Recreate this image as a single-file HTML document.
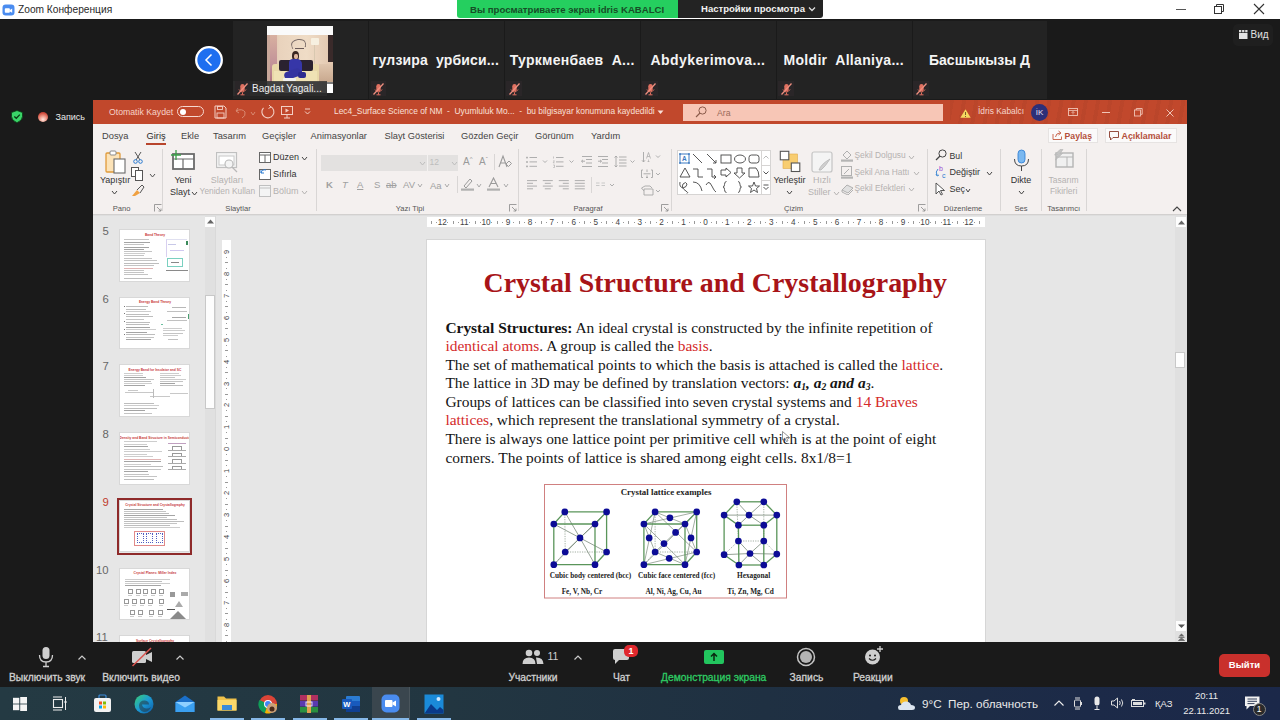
<!DOCTYPE html>
<html><head><meta charset="utf-8"><style>*{margin:0;padding:0;box-sizing:border-box}
html,body{width:1280px;height:720px;overflow:hidden;background:#1a1a1a;font-family:"Liberation Sans",sans-serif;position:relative}
.a{position:absolute}
.t{position:absolute;white-space:nowrap;line-height:1.15}
.r{color:#d42a2a}
sub{font-size:0.62em;vertical-align:-0.25em;line-height:0}
</style></head><body>

<div class="a" style="left:0;top:0;width:1280px;height:19px;background:#fff"></div>
<svg class="a" style="left:2px;top:3.5px" width="13" height="12" viewBox="0 0 14 13"><rect x="0.5" y="0.5" width="13" height="12" rx="3.5" fill="#4a8cf0"/><rect x="3" y="4.5" width="5.5" height="5" rx="1" fill="#fff"/><path d="M8.5 6.5 L11 5 V9.5 L8.5 8Z" fill="#fff"/></svg>
<div class="t" style="left:18px;top:4.3px;font-size:10.2px;color:#2a2a2a">Zoom Конференция</div>
<div class="a" style="left:457px;top:0;width:221px;height:18px;background:#25cf5f;border-radius:0 0 0 3px"></div>
<div class="t" style="left:470px;top:3.8px;font-size:9.6px;font-weight:bold;color:#174d27">Вы просматриваете экран İdris KABALCI</div>
<div class="a" style="left:678px;top:0;width:145px;height:18px;background:#232323;border-radius:0 0 3px 0"></div>
<div class="t" style="left:701px;top:3.8px;font-size:9.55px;font-weight:bold;color:#f2f2f2">Настройки просмотра</div>
<svg class="a" style="left:808px;top:6px" width="8" height="6"><path d="M1 1.5 L4 4.5 L7 1.5" stroke="#ddd" stroke-width="1.3" fill="none"/></svg>
<div class="a" style="left:1176px;top:9px;width:10px;height:1px;background:#555"></div>
<svg class="a" style="left:1213px;top:3px" width="12" height="12"><rect x="1.5" y="3.5" width="7" height="7" fill="none" stroke="#333" stroke-width="1"/><path d="M3.5 3.5 V1.5 H10.5 V8.5 H8.5" fill="none" stroke="#333" stroke-width="1"/></svg>
<svg class="a" style="left:1253px;top:3px" width="12" height="12"><path d="M1 1 L11 11 M11 1 L1 11" stroke="#333" stroke-width="1.1"/></svg>
<div class="a" style="left:233px;top:21px;width:135px;height:78px;background:#232323"></div><div class="a" style="left:369px;top:21px;width:135px;height:78px;background:#232323"></div><div class="a" style="left:505px;top:21px;width:135px;height:78px;background:#232323"></div><div class="a" style="left:641px;top:21px;width:135px;height:78px;background:#232323"></div><div class="a" style="left:777px;top:21px;width:135px;height:78px;background:#232323"></div><div class="a" style="left:913px;top:21px;width:134px;height:78px;background:#232323"></div><div class="t" style="left:372.6px;top:51.5px;font-size:14px;font-weight:bold;color:#f4f4f4;letter-spacing:0.16px">гулзира&nbsp; урбиси...</div><div class="t" style="left:509.8px;top:51.5px;font-size:14px;font-weight:bold;color:#f4f4f4;letter-spacing:0.27px">Туркменбаев&nbsp; А...</div><div class="t" style="left:650.5px;top:51.5px;font-size:14px;font-weight:bold;color:#f4f4f4;letter-spacing:0.45px">Abdykerimova...</div><div class="t" style="left:783.5px;top:51.5px;font-size:14px;font-weight:bold;color:#f4f4f4;letter-spacing:0.31px">Moldir&nbsp; Allaniya...</div><div class="t" style="left:929px;top:51.5px;font-size:14px;font-weight:bold;color:#f4f4f4;letter-spacing:0.0px">Басшыкызы Д</div>
<div class="a" style="left:267px;top:26px;width:66px;height:67px;background:linear-gradient(90deg,#d9b9a6 0,#e9d3bd 20%,#efdcc6 60%,#e2c6ae 100%);overflow:hidden">
 <div class="a" style="left:0;top:0;width:66px;height:8.5px;background:#fafafa"></div>
 <div class="a" style="left:0;top:9px;width:3px;height:58px;background:#c8a89a"></div>
 <div class="a" style="left:3px;top:9px;width:7px;height:52px;background:linear-gradient(180deg,#d8b0a0,#c09098 60%,#a86878)"></div>
 <div class="a" style="left:61px;top:9px;width:5px;height:27px;background:#3a2a2a"></div>
 <div class="a" style="left:44px;top:12px;width:8px;height:7px;background:#f7f0e0;border-radius:1px"></div>
 <div class="a" style="left:47px;top:19px;width:1px;height:34px;background:#d8c8b0"></div>
 <div class="a" style="left:24px;top:13px;width:15px;height:10px;border:1.5px solid #7a6c68;border-radius:50% 50% 30% 30%;border-bottom-color:transparent;transform:rotate(-8deg)"></div>
 <div class="a" style="left:28px;top:18px;width:9px;height:5px;border-bottom:1.5px solid #6a5a58"></div>
 <div class="a" style="left:5px;top:38px;width:47px;height:20px;background:#e8d8a8;border-radius:3px 3px 1px 1px"></div>
 <div class="a" style="left:12px;top:34px;width:34px;height:11px;background:#2a2230;border-radius:2px"></div>
 <div class="a" style="left:7px;top:45px;width:43px;height:11px;background:#efe2b4"></div>
 <div class="a" style="left:25px;top:25px;width:7px;height:9px;background:#3a2622;border-radius:50% 50% 40% 40%"></div>
 <div class="a" style="left:27px;top:28px;width:4px;height:5px;background:#e0b8a0;border-radius:40%"></div>
 <div class="a" style="left:22px;top:33px;width:13px;height:15px;background:#3636a8;border-radius:4px 5px 2px 2px"></div>
 <div class="a" style="left:17px;top:44px;width:17px;height:8px;background:#3434a0;border-radius:4px;transform:rotate(-20deg)"></div>
 <div class="a" style="left:31px;top:46px;width:8px;height:6px;background:#2c2c90;border-radius:2px"></div>
 <div class="a" style="left:16px;top:52px;width:13px;height:3px;background:#f0f0f0;border-radius:1px"></div>
 <div class="a" style="left:0;top:56px;width:66px;height:11px;background:linear-gradient(90deg,#8a8a8a,#9a9a9a 50%,#7a7a7a)"></div>
 <div class="a" style="left:52px;top:38px;width:14px;height:18px;background:linear-gradient(180deg,#e0c6ae,#c8a88e)"></div>
</div>
<div class="a" style="left:233px;top:81px;width:94px;height:15px;background:rgba(45,45,45,0.8)"></div>
<div class="t" style="left:252px;top:83px;font-size:10px;color:#eee">Bagdat Yagali...</div>
<div class="a" style="left:327px;top:84px;width:6px;height:9px;background:#fff"></div>

<svg class="a" style="left:194.5px;top:46px" width="28" height="28"><circle cx="14" cy="14" r="12.8" fill="#1e6ff0" stroke="#fff" stroke-width="2.3"/><path d="M16.5 8.5 L11 14 L16.5 19.5" stroke="#fff" stroke-width="1.5" fill="none"/></svg>

<div class="a" style="left:1233px;top:24px;width:40px;height:22px;background:#1f1f1f;border-radius:5px"></div>
<svg class="a" style="left:1238.5px;top:30px" width="10" height="10"><rect x="0" y="3" width="8.5" height="6" fill="#e4e4e4"/><rect x="0" y="0" width="2.3" height="2.3" fill="#ddd"/><rect x="3.1" y="0" width="2.3" height="2.3" fill="#ddd"/><rect x="6.2" y="0" width="2.3" height="2.3" fill="#ddd"/></svg>
<div class="t" style="left:1250.5px;top:29px;font-size:10px;color:#e0e0e0">Вид</div>

<svg class="a" style="left:10.5px;top:110px" width="12" height="13"><path d="M6 0.5 L11.5 2.5 V6.5 Q11.5 10.5 6 12.7 Q0.5 10.5 0.5 6.5 V2.5Z" fill="#3ad468" stroke="#0a3a14" stroke-width="0.8"/><path d="M3.3 6.5 L5.3 8.3 L8.8 4.6" stroke="#0a3a14" stroke-width="1.3" fill="none"/></svg>
<div class="a" style="left:37.8px;top:111.8px;width:10.5px;height:10.5px;border-radius:50%;background:radial-gradient(circle at 50% 75%,#ffe8e0 0,#f0a090 35%,#d05040 70%,#a02020 100%)"></div>
<div class="t" style="left:55.5px;top:111.5px;font-size:9px;color:#e8e8e8">Запись</div>
<div class="a" style="left:234.5px;top:80.8px;width:15.5px;height:15.5px;background:#2a2628"></div><svg class="a" style="left:236.0px;top:81.5px" width="13" height="14"><rect x="4.3" y="2" width="4.4" height="7.5" rx="2.2" fill="#e07060"/><path d="M3 7.5 Q6.5 12.5 10 7.5 M6.5 10.5 V12.5 M4.5 12.8 H8.5" stroke="#e07060" stroke-width="1" fill="none"/><path d="M1.5 12.5 L11.5 1.5" stroke="#f09080" stroke-width="1.2"/></svg><div class="a" style="left:370.5px;top:80.8px;width:15.5px;height:15.5px;background:#2a2628"></div><svg class="a" style="left:372.0px;top:81.5px" width="13" height="14"><rect x="4.3" y="2" width="4.4" height="7.5" rx="2.2" fill="#e07060"/><path d="M3 7.5 Q6.5 12.5 10 7.5 M6.5 10.5 V12.5 M4.5 12.8 H8.5" stroke="#e07060" stroke-width="1" fill="none"/><path d="M1.5 12.5 L11.5 1.5" stroke="#f09080" stroke-width="1.2"/></svg><div class="a" style="left:506px;top:80.8px;width:15.5px;height:15.5px;background:#2a2628"></div><svg class="a" style="left:507.5px;top:81.5px" width="13" height="14"><rect x="4.3" y="2" width="4.4" height="7.5" rx="2.2" fill="#e07060"/><path d="M3 7.5 Q6.5 12.5 10 7.5 M6.5 10.5 V12.5 M4.5 12.8 H8.5" stroke="#e07060" stroke-width="1" fill="none"/><path d="M1.5 12.5 L11.5 1.5" stroke="#f09080" stroke-width="1.2"/></svg><div class="a" style="left:642px;top:80.8px;width:15.5px;height:15.5px;background:#2a2628"></div><svg class="a" style="left:643.5px;top:81.5px" width="13" height="14"><rect x="4.3" y="2" width="4.4" height="7.5" rx="2.2" fill="#e07060"/><path d="M3 7.5 Q6.5 12.5 10 7.5 M6.5 10.5 V12.5 M4.5 12.8 H8.5" stroke="#e07060" stroke-width="1" fill="none"/><path d="M1.5 12.5 L11.5 1.5" stroke="#f09080" stroke-width="1.2"/></svg><div class="a" style="left:778px;top:80.8px;width:15.5px;height:15.5px;background:#2a2628"></div><svg class="a" style="left:779.5px;top:81.5px" width="13" height="14"><rect x="4.3" y="2" width="4.4" height="7.5" rx="2.2" fill="#e07060"/><path d="M3 7.5 Q6.5 12.5 10 7.5 M6.5 10.5 V12.5 M4.5 12.8 H8.5" stroke="#e07060" stroke-width="1" fill="none"/><path d="M1.5 12.5 L11.5 1.5" stroke="#f09080" stroke-width="1.2"/></svg><div class="a" style="left:913px;top:80.8px;width:15.5px;height:15.5px;background:#2a2628"></div><svg class="a" style="left:914.5px;top:81.5px" width="13" height="14"><rect x="4.3" y="2" width="4.4" height="7.5" rx="2.2" fill="#e07060"/><path d="M3 7.5 Q6.5 12.5 10 7.5 M6.5 10.5 V12.5 M4.5 12.8 H8.5" stroke="#e07060" stroke-width="1" fill="none"/><path d="M1.5 12.5 L11.5 1.5" stroke="#f09080" stroke-width="1.2"/></svg><div class="a" style="left:93px;top:100px;width:1094px;height:542px;background:#e6e6e6"></div><div class="a" style="left:93px;top:100px;width:1094px;height:24px;background:#c1482c"></div><div class="a" style="left:950px;top:100px;width:237px;height:24px;background:repeating-linear-gradient(100deg,rgba(0,0,0,0.035) 0 4px,rgba(255,255,255,0.0) 4px 12px)"></div><div class="t" style="left:109px;top:107.0px;font-size:8.7px;color:#f6d2c8;">Otomatik Kaydet</div><div class="a" style="left:177px;top:106px;width:27px;height:11px;border:1.2px solid #f6d8d0;border-radius:6px"></div><div class="a" style="left:180px;top:108.5px;width:6px;height:6px;border-radius:50%;background:#fff"></div><svg class="a" style="left:214px;top:105px" width="13" height="14"><path d="M1 1 H10 L12 3 V13 H1Z" fill="none" stroke="#f3cfc4" stroke-width="1"/><rect x="3.5" y="1.5" width="5" height="3" fill="none" stroke="#f3cfc4" stroke-width="0.9"/><rect x="3" y="8" width="7" height="5" fill="none" stroke="#f3cfc4" stroke-width="0.9"/></svg><svg class="a" style="left:234px;top:105px" width="14" height="14"><path d="M4 3 L2 6 L5 8 M2 6 Q8 3 11 7 Q12 11 8 13" fill="none" stroke="#d98a72" stroke-width="1"/></svg><svg class="a" style="left:250px;top:111px" width="6" height="5"><path d="M1 1 L3.0 4 L5 1" stroke="#d98a72" stroke-width="1" fill="none"/></svg><svg class="a" style="left:260px;top:104px" width="15" height="15"><path d="M10.5 2.5 A6 6 0 1 1 3.5 3.8" fill="none" stroke="#f3cfc4" stroke-width="1.1"/><path d="M9 1 L11 3 L8.5 4.5" fill="none" stroke="#f3cfc4" stroke-width="1"/></svg><svg class="a" style="left:281px;top:105px" width="12" height="14"><rect x="0.5" y="1.5" width="11" height="8" fill="none" stroke="#f3cfc4" stroke-width="1"/><path d="M6 9.5 V13 M3 13 H9" stroke="#f3cfc4" stroke-width="1"/><path d="M4.5 3.5 L8 5.5 L4.5 7.5Z" fill="#f3cfc4"/></svg><svg class="a" style="left:304px;top:108px" width="7" height="7"><path d="M1 1 H6 M1 3.5 L3.5 6 L6 3.5" stroke="#f3cfc4" stroke-width="1" fill="none"/></svg><div class="t" style="left:334px;top:107.1px;font-size:8.4px;color:#fae0d8;">Lec4_Surface Science of NM&nbsp; -&nbsp; Uyumluluk Mo...&nbsp; -&nbsp; bu bilgisayar konumuna kaydedildi</div><svg class="a" style="left:657px;top:110px" width="7" height="5"><path d="M0.5 0.5 H6.5 L3.5 4Z" fill="#fae0d8"/></svg><div class="a" style="left:683px;top:104px;width:260px;height:17px;background:#f7c6b6"></div><svg class="a" style="left:695px;top:106px" width="12" height="12"><circle cx="7.5" cy="4.5" r="3.6" fill="none" stroke="#8a5a4a" stroke-width="1"/><path d="M5 7 L1 11" stroke="#8a5a4a" stroke-width="1.1"/></svg><div class="t" style="left:717px;top:107.5px;font-size:8.7px;color:#9a6a5a;">Ara</div><svg class="a" style="left:960px;top:108.5px" width="11" height="9"><path d="M5.5 0.3 L10.7 8.7 H0.3Z" fill="#f6d860"/><path d="M5.5 3 V6 M5.5 7 V8" stroke="#6a5020" stroke-width="0.9"/></svg><div class="t" style="left:978px;top:107.1px;font-size:8.4px;color:#f6d6cc;">İdris Kabalcı</div><div class="a" style="left:1031px;top:104px;width:17px;height:17px;border-radius:50%;background:#2c2f78"></div><div class="t" style="left:1039.5px;top:107.9px;font-size:8px;color:#e8e0f0;transform:translateX(-50%);">İK</div><svg class="a" style="left:1067.5px;top:108px" width="10" height="8"><rect x="0.5" y="0.5" width="9" height="7" fill="none" stroke="#f0c4b6" stroke-width="0.9"/><path d="M0.5 2.5 H9.5" stroke="#f0c4b6" stroke-width="0.8"/><path d="M5 3.5 V6.5 M3.5 5 L5 3.5 L6.5 5" stroke="#f0c4b6" stroke-width="0.7" fill="none"/></svg><div class="a" style="left:1102px;top:112px;width:7.5px;height:1px;background:#f0c4b6"></div><svg class="a" style="left:1133.5px;top:108px" width="9" height="9"><rect x="0.5" y="2" width="6" height="6" fill="none" stroke="#f0c4b6" stroke-width="0.9"/><path d="M2.3 2 V0.5 H8.2 V6.3 H6.5" fill="none" stroke="#f0c4b6" stroke-width="0.9"/></svg><svg class="a" style="left:1166px;top:108.5px" width="8" height="8"><path d="M0.5 0.5 L7.5 7.5 M7.5 0.5 L0.5 7.5" stroke="#f0c4b6" stroke-width="1"/></svg><div class="a" style="left:93px;top:124px;width:1094px;height:90px;background:#f4f0ef"></div><div class="a" style="left:93px;top:214px;width:1094px;height:1px;background:#d2d0cf"></div><div class="a" style="left:93px;top:215px;width:1094px;height:1px;background:#dedede"></div><div class="t" style="left:102px;top:130.6px;font-size:9.3px;color:#444;">Dosya</div><div class="t" style="left:146.5px;top:130.6px;font-size:9.3px;color:#2b2b2b;">Giriş</div><div class="t" style="left:181px;top:130.6px;font-size:9.3px;color:#444;">Ekle</div><div class="t" style="left:213px;top:130.6px;font-size:9.3px;color:#444;">Tasarım</div><div class="t" style="left:262px;top:130.6px;font-size:9.3px;color:#444;">Geçişler</div><div class="t" style="left:310.6px;top:130.6px;font-size:9.3px;color:#444;">Animasyonlar</div><div class="t" style="left:384.5px;top:130.6px;font-size:9.3px;color:#444;">Slayt Gösterisi</div><div class="t" style="left:461px;top:130.6px;font-size:9.3px;color:#444;">Gözden Geçir</div><div class="t" style="left:535px;top:130.6px;font-size:9.3px;color:#444;">Görünüm</div><div class="t" style="left:591px;top:130.6px;font-size:9.3px;color:#444;">Yardım</div><div class="a" style="left:146px;top:142.5px;width:20px;height:2.2px;background:#b8452c"></div><div class="a" style="left:1048px;top:128px;width:50px;height:15px;background:#fbfafa;border:1px solid #e6e3e2"></div><svg class="a" style="left:1052px;top:130px" width="11" height="10"><path d="M1 4 V9.5 H9.5 V6.5" fill="none" stroke="#c45a40" stroke-width="0.9"/><path d="M3.5 7 Q4 3 8 3 M6.5 1 L9 3 L6.5 5" fill="none" stroke="#c45a40" stroke-width="0.9"/></svg><div class="t" style="left:1064.5px;top:130.8px;font-size:8.7px;color:#b4503c;font-weight:bold">Paylaş</div><div class="a" style="left:1105px;top:128px;width:72px;height:15px;background:#fbfafa;border:1px solid #e6e3e2"></div><svg class="a" style="left:1109px;top:131px" width="10" height="10"><path d="M0.5 0.5 H9.5 V6.5 H4 L1.5 9 V6.5 H0.5Z" fill="none" stroke="#8a3a2a" stroke-width="0.9"/></svg><div class="t" style="left:1121.5px;top:130.6px;font-size:8.9px;color:#b4503c;font-weight:bold">Açıklamalar</div><div class="a" style="left:162.4px;top:149px;width:1px;height:62px;background:#d9d6d5"></div><div class="a" style="left:316px;top:149px;width:1px;height:62px;background:#d9d6d5"></div><div class="a" style="left:517.5px;top:149px;width:1px;height:62px;background:#d9d6d5"></div><div class="a" style="left:670.5px;top:149px;width:1px;height:62px;background:#d9d6d5"></div><div class="a" style="left:927px;top:149px;width:1px;height:62px;background:#d9d6d5"></div><div class="a" style="left:1000px;top:149px;width:1px;height:62px;background:#d9d6d5"></div><div class="a" style="left:1041px;top:149px;width:1px;height:62px;background:#d9d6d5"></div><div class="a" style="left:1085.6px;top:149px;width:1px;height:62px;background:#d9d6d5"></div><div class="t" style="left:121.5px;top:204.6px;font-size:7.6px;color:#555;transform:translateX(-50%);">Pano</div><div class="t" style="left:238px;top:204.6px;font-size:7.6px;color:#555;transform:translateX(-50%);">Slaytlar</div><div class="t" style="left:410px;top:204.6px;font-size:7.6px;color:#555;transform:translateX(-50%);">Yazı Tipi</div><div class="t" style="left:588px;top:204.6px;font-size:7.6px;color:#555;transform:translateX(-50%);">Paragraf</div><div class="t" style="left:793.5px;top:204.6px;font-size:7.6px;color:#555;transform:translateX(-50%);">Çizim</div><div class="t" style="left:963px;top:204.6px;font-size:7.6px;color:#555;transform:translateX(-50%);">Düzenleme</div><div class="t" style="left:1021px;top:204.6px;font-size:7.6px;color:#555;transform:translateX(-50%);">Ses</div><div class="t" style="left:1063.6px;top:204.6px;font-size:7.6px;color:#555;transform:translateX(-50%);">Tasarımcı</div><svg class="a" style="left:154px;top:204px" width="8" height="8"><path d="M0.5 7.5 V0.5 H7.5" fill="none" stroke="#888" stroke-width="0.8"/><path d="M3 3 L7 7 M4.5 7 H7 V4.5" fill="none" stroke="#888" stroke-width="0.8"/></svg><svg class="a" style="left:509px;top:204px" width="8" height="8"><path d="M0.5 7.5 V0.5 H7.5" fill="none" stroke="#888" stroke-width="0.8"/><path d="M3 3 L7 7 M4.5 7 H7 V4.5" fill="none" stroke="#888" stroke-width="0.8"/></svg><svg class="a" style="left:661px;top:204px" width="8" height="8"><path d="M0.5 7.5 V0.5 H7.5" fill="none" stroke="#888" stroke-width="0.8"/><path d="M3 3 L7 7 M4.5 7 H7 V4.5" fill="none" stroke="#888" stroke-width="0.8"/></svg><svg class="a" style="left:918px;top:204px" width="8" height="8"><path d="M0.5 7.5 V0.5 H7.5" fill="none" stroke="#888" stroke-width="0.8"/><path d="M3 3 L7 7 M4.5 7 H7 V4.5" fill="none" stroke="#888" stroke-width="0.8"/></svg><svg class="a" style="left:1172px;top:206px" width="10" height="6"><path d="M1 5 L5 1 L9 5" stroke="#444" stroke-width="1.1" fill="none"/></svg><svg class="a" style="left:104px;top:150px" width="24" height="24"><rect x="2" y="3" width="14" height="19" rx="1" fill="#fce3b8" stroke="#e09a3a" stroke-width="1.3"/><rect x="6" y="1" width="6" height="4" rx="1" fill="#fff" stroke="#8a8a8a" stroke-width="1"/><rect x="10" y="9" width="11" height="14" fill="#fff" stroke="#6a6a6a" stroke-width="1.1"/></svg><div class="t" style="left:100px;top:175.1px;font-size:9px;color:#333;">Yapıştır</div><svg class="a" style="left:111px;top:190px" width="7" height="5"><path d="M1 1 L3.5 4 L6 1" stroke="#444" stroke-width="1" fill="none"/></svg><svg class="a" style="left:133px;top:151px" width="10" height="13"><path d="M2 1 L7 9 M8 1 L3 9" stroke="#555" stroke-width="1"/><circle cx="2.5" cy="10.5" r="1.8" fill="none" stroke="#2a7ad0" stroke-width="1"/><circle cx="7.5" cy="10.5" r="1.8" fill="none" stroke="#2a7ad0" stroke-width="1"/></svg><svg class="a" style="left:131px;top:167px" width="13" height="14"><rect x="0.5" y="0.5" width="7" height="9" fill="#fff" stroke="#555"/><rect x="4.5" y="3.5" width="7" height="10" fill="#fff" stroke="#555"/></svg><svg class="a" style="left:149px;top:173px" width="7" height="5"><path d="M1 1 L3.5 4 L6 1" stroke="#555" stroke-width="1" fill="none"/></svg><svg class="a" style="left:131px;top:184px" width="14" height="13"><path d="M1 12 L6 6 L9 9 L4 12Z" fill="#f0a040"/><path d="M6 6 L11 1 L13 3 L9 9" fill="none" stroke="#555" stroke-width="1"/></svg><svg class="a" style="left:170px;top:150px" width="26" height="21"><rect x="3" y="4" width="21" height="15" fill="#fff" stroke="#6a6a6a" stroke-width="1.8"/><path d="M3 9 H24 M13 9 V19" stroke="#6a6a6a" stroke-width="1.2"/><path d="M6 0 V10 M1 5 H11" stroke="#3aa048" stroke-width="1.3"/></svg><div class="t" style="left:183px;top:175.1px;font-size:9px;color:#333;transform:translateX(-50%);">Yeni</div><div class="t" style="left:170px;top:186.8px;font-size:9px;color:#333;">Slayt</div><svg class="a" style="left:191px;top:191px" width="7" height="5"><path d="M1 1 L3.5 4 L6 1" stroke="#444" stroke-width="1" fill="none"/></svg><svg class="a" style="left:216px;top:152px" width="23" height="22"><rect x="0.5" y="0.5" width="20" height="15" fill="#f4f4f4" stroke="#c0c0c0" stroke-width="1.2"/><rect x="3" y="4" width="15" height="9" fill="#fff" stroke="#c8c8c8"/><circle cx="13" cy="12" r="4" fill="#f4f4f4" stroke="#b8b8b8" stroke-width="1.1"/><path d="M16 15 L21 20" stroke="#b8b8b8" stroke-width="1.3"/></svg><div class="t" style="left:227px;top:175.1px;font-size:9px;color:#b4b2b1;transform:translateX(-50%);">Slaytları</div><div class="t" style="left:199.6px;top:187.1px;font-size:8.4px;color:#b4b2b1;">Yeniden Kullan</div><svg class="a" style="left:259px;top:152px" width="12" height="11"><rect x="0.5" y="0.5" width="11" height="10" fill="#fff" stroke="#666"/><path d="M0.5 3 H11.5 M6 3 V10.5" stroke="#666"/></svg><div class="t" style="left:273px;top:152.3px;font-size:9px;color:#333;">Düzen</div><svg class="a" style="left:301px;top:156px" width="7" height="5"><path d="M1 1 L3.5 4 L6 1" stroke="#444" stroke-width="1" fill="none"/></svg><svg class="a" style="left:259px;top:168px" width="12" height="12"><rect x="0.5" y="1.5" width="11" height="10" fill="#fff" stroke="#666"/><path d="M2 5 Q3 1 7 2 M2 2 V5 H5" fill="none" stroke="#2a7ad0" stroke-width="1"/></svg><div class="t" style="left:273px;top:169.1px;font-size:9px;color:#333;">Sıfırla</div><svg class="a" style="left:259px;top:185px" width="12" height="12"><rect x="0.5" y="0.5" width="11" height="11" fill="#f4f4f4" stroke="#c0c0c0"/><path d="M0.5 3 H11.5" stroke="#c0c0c0"/></svg><div class="t" style="left:273px;top:186.3px;font-size:9px;color:#b4b2b1;">Bölüm</div><svg class="a" style="left:301px;top:190px" width="7" height="5"><path d="M1 1 L3.5 4 L6 1" stroke="#b4b2b1" stroke-width="1" fill="none"/></svg><div class="a" style="left:321px;top:154.5px;width:106px;height:16.5px;background:#e3e1e0"></div><div class="a" style="left:427px;top:154.5px;width:31px;height:16.5px;background:#e3e1e0;border-left:1px solid #f3f1f0"></div><svg class="a" style="left:419px;top:161px" width="7" height="5"><path d="M1 1 L3.5 4 L6 1" stroke="#bdbdbd" stroke-width="1" fill="none"/></svg><div class="t" style="left:429.5px;top:157.6px;font-size:8.5px;color:#bdbdbd;">12</div><svg class="a" style="left:451px;top:161px" width="7" height="5"><path d="M1 1 L3.5 4 L6 1" stroke="#bdbdbd" stroke-width="1" fill="none"/></svg><div class="t" style="left:463px;top:156.2px;font-size:10px;color:#9a9a9a;">A<sup style="font-size:6px">^</sup></div><div class="t" style="left:479px;top:156.2px;font-size:10px;color:#9a9a9a;">A<sup style="font-size:6px">ˇ</sup></div><div class="a" style="left:494px;top:154px;width:1px;height:16px;background:#d9d6d5"></div><svg class="a" style="left:498px;top:154px" width="14" height="15"><path d="M1 13 L5 2 L9 13 M2.5 9 H7.5" fill="none" stroke="#9a9a9a" stroke-width="1.1"/><path d="M8 10 L11 7 L13.5 9.5 L10.5 12.5Z" fill="none" stroke="#9a9a9a"/></svg><div class="t" style="left:326px;top:180.0px;font-size:9.5px;color:#a0a0a0;font-weight:bold">K</div><div class="t" style="left:342px;top:180.0px;font-size:9.5px;color:#a0a0a0;font-style:italic">T</div><div class="t" style="left:357px;top:180.0px;font-size:9.5px;color:#a0a0a0;text-decoration:underline">A</div><div class="t" style="left:374px;top:180.0px;font-size:9.5px;color:#a0a0a0;">S</div><div class="t" style="left:386px;top:180.0px;font-size:9.5px;color:#a0a0a0;text-decoration:line-through">ab</div><div class="t" style="left:403px;top:180.0px;font-size:9.5px;color:#a0a0a0;">AV</div><svg class="a" style="left:417px;top:183px" width="6" height="5"><path d="M1 1 L3.0 4 L5 1" stroke="#aaa" stroke-width="1" fill="none"/></svg><div class="t" style="left:430px;top:180.5px;font-size:9.5px;color:#a0a0a0;">Aa</div><svg class="a" style="left:444px;top:183px" width="6" height="5"><path d="M1 1 L3.0 4 L5 1" stroke="#aaa" stroke-width="1" fill="none"/></svg><div class="a" style="left:456.8px;top:176px;width:1px;height:17px;background:#d9d6d5"></div><svg class="a" style="left:461px;top:177px" width="13" height="14"><path d="M3 9 L9 2 L11 4 L5 11Z" fill="none" stroke="#9a9a9a" stroke-width="1"/><rect x="0" y="11.5" width="13" height="2.2" fill="#b0b0b0"/></svg><svg class="a" style="left:476px;top:183px" width="6" height="5"><path d="M1 1 L3.0 4 L5 1" stroke="#aaa" stroke-width="1" fill="none"/></svg><svg class="a" style="left:487px;top:177px" width="13" height="14"><path d="M2 10 L6.5 1 L11 10 M3.8 6.5 H9.2" fill="none" stroke="#9a9a9a" stroke-width="1.1"/><rect x="0" y="11.5" width="13" height="2.2" fill="#b0b0b0"/></svg><svg class="a" style="left:503px;top:183px" width="6" height="5"><path d="M1 1 L3.0 4 L5 1" stroke="#aaa" stroke-width="1" fill="none"/></svg><svg class="a" style="left:520px;top:148px" width="150" height="50" viewBox="520 148 150 50" fill="none" stroke="#a6a6a6" stroke-width="0.9">
<rect x="526.2" y="156.8" width="1.6" height="1.6" fill="#a6a6a6" stroke="none"/><rect x="526.2" y="161.2" width="1.6" height="1.6" fill="#a6a6a6" stroke="none"/><rect x="526.2" y="165.6" width="1.6" height="1.6" fill="#a6a6a6" stroke="none"/>
<path d="M529.5 157.5 H537 M529.5 161.9 H537 M529.5 166.3 H537"/>
<path d="M543 160.5 L545 162.5 L547 160.5"/>
<path d="M553.5 156.5 V158.5 M553.2 160.8 H554.4 L553.2 162.8 H554.6 M553.2 165 H554.5 V167.5 H553.2" stroke-width="0.6"/>
<path d="M556 157.5 H563.5 M556 161.9 H563.5 M556 166.3 H563.5"/>
<path d="M569.5 160.5 L571.5 162.5 L573.5 160.5"/>
<path d="M582 156.5 H592 M586 159.5 H592 M586 163 H592 M582 166.5 H592"/><path d="M585 161.2 H581.5 M583 159.8 L581.5 161.2 L583 162.6"/>
<path d="M598 156.5 H608 M602 159.5 H608 M602 163 H608 M598 166.5 H608"/><path d="M598 161.2 H601.5 M600 159.8 L601.5 161.2 L600 162.6"/>
<path d="M619 157 H626.5 M619 160 H626.5 M619 163 H626.5 M619 166 H626.5"/><path d="M616 156 V167 M614.6 157.6 L616 156 L617.4 157.6 M614.6 165.4 L616 167 L617.4 165.4"/>
<path d="M630.5 160.5 L632.5 162.5 L634.5 160.5"/>
<path d="M643.5 152 V162 M642 160.3 L643.5 162 L645 160.3"/><path d="M646.5 158.5 L648.5 152.5 L650.5 158.5 M647.2 156.5 H649.8" stroke-width="0.7"/><path d="M648.5 159.5 V162 M647.5 161 L648.5 162 L649.5 161" stroke-width="0.6"/>
<path d="M656 155.5 L658 157.5 L660 155.5"/>
<path d="M527 180.6 H537 M527 183.3 H533 M527 186.1 H537 M527 188.8 H533"/>
<path d="M542.8 180.6 H552.8 M544.8 183.3 H550.8 M542.8 186.1 H552.8 M544.8 188.8 H550.8"/>
<path d="M558.8 180.6 H568.8 M562.8 183.3 H568.8 M558.8 186.1 H568.8 M562.8 188.8 H568.8"/>
<path d="M574.8 180.6 H584.8 M574.8 183.3 H584.8 M574.8 186.1 H584.8 M574.8 188.8 H584.8"/>
<path d="M596 183 H599.5 M596 185.5 H599.5 M601.5 183 H605 M601.5 185.5 H605" stroke="#c4c4c4"/>
<path d="M610 184 L612 186 L614 184"/>
<path d="M643 170 H641.5 V177.5 H643 M651 170 H652.5 V177.5 H651 M643.5 173.8 H650.5 M647 169.5 V172 M647 175.5 V178 M646 177 L647 178 L648 177"/>
<path d="M656 173 L658 175 L660 173"/>
<path d="M641.5 188 L645 186 H650 L652 188 M644 189 H653 V195 H644Z" fill="#f4f0ef"/><path d="M641.5 188 L644 191"/>
<path d="M656 190 L658 192 L660 190"/>
</svg><div class="a" style="left:590.6px;top:177px;width:1px;height:16px;background:#d9d6d5"></div><div class="a" style="left:677px;top:150px;width:94px;height:44.5px;background:#fff;border:1px solid #d6d4d3"></div><div class="a" style="left:760.5px;top:150px;width:10.5px;height:44.5px;border-left:1px solid #d6d4d3"></div><div class="a" style="left:760.5px;top:165px;width:10.5px;height:1px;background:#d6d4d3"></div><div class="a" style="left:760.5px;top:180px;width:10.5px;height:1px;background:#d6d4d3"></div><svg class="a" style="left:763px;top:155px" width="6" height="4"><path d="M0.5 3.5 L3 1 L5.5 3.5" stroke="#bbb" fill="none"/></svg><svg class="a" style="left:763px;top:171px" width="6" height="4"><path d="M0.5 0.5 L3 3 L5.5 0.5" stroke="#555" fill="none"/></svg><svg class="a" style="left:763px;top:184px" width="6" height="7"><path d="M0.5 1 H5.5 M0.5 3 L3 5.5 L5.5 3" stroke="#555" fill="none"/></svg><svg class="a" style="left:678px;top:151px" width="82" height="43" viewBox="0 0 82 43" fill="none" stroke="#444" stroke-width="0.9">
<rect x="2" y="3" width="9" height="9" stroke="#3a78c0" stroke-width="1"/><rect x="1.2" y="2.2" width="1.6" height="1.6" fill="#3a78c0" stroke="none"/><rect x="10.2" y="2.2" width="1.6" height="1.6" fill="#3a78c0" stroke="none"/><rect x="1.2" y="11.2" width="1.6" height="1.6" fill="#3a78c0" stroke="none"/><rect x="10.2" y="11.2" width="1.6" height="1.6" fill="#3a78c0" stroke="none"/><text x="4" y="10" font-size="6.5" font-weight="bold" fill="#3a78c0" stroke="none" font-family="Liberation Sans">A</text>
<path d="M15 3 L24 12"/><path d="M29 3 L38 12 M38 9 V12 H35"/>
<rect x="43" y="4" width="10" height="8"/><ellipse cx="62" cy="8" rx="5.5" ry="4"/><rect x="71" y="4" width="10" height="8" rx="2.5"/>
<path d="M2 26 L7 17 L12 26Z"/><path d="M15 18 H20 V26 H25"/><path d="M29 18 H34 V26 H38 M36 24 L38 26 L36 28"/>
<path d="M43 19 H48 V17 L53 21.5 L48 26 V24 H43Z"/><path d="M59 17 H64 V22 H67 L61.5 27 L56 22 H59Z"/><path d="M71 17 H78 Q81 20 81 26 H71Z"/>
<path d="M2 31 Q1 36 5 37 Q9 36 9 33 Q8 30 5 33 Q3 37 8 40 Q11 42 9 42.5"/><path d="M15 31 Q22 31 24 40"/><path d="M28 34 Q30 30 32 32 Q34 35 35.5 38 Q36.5 40 38 41"/>
<path d="M48.5 30.5 Q46.5 30.5 46.5 33.5 Q46.5 36 45 36 Q46.5 36 46.5 38.5 Q46.5 41.5 48.5 41.5"/><path d="M60 30.5 Q62 30.5 62 33.5 Q62 36 63.5 36 Q62 36 62 38.5 Q62 41.5 60 41.5"/>
<path d="M76 31 L77.5 35 L81.5 35 L78.5 37.5 L79.5 41.5 L76 39 L72.5 41.5 L73.5 37.5 L70.5 35 L74.5 35Z"/>
</svg><svg class="a" style="left:778.5px;top:150px" width="23" height="23"><rect x="4" y="4" width="14.5" height="14.5" fill="#f8cd70" stroke="#e0a848" stroke-width="0.6"/><rect x="1.3" y="1.3" width="8.5" height="8.5" fill="#fff" stroke="#555" stroke-width="1.1"/><rect x="12.3" y="13" width="8.5" height="8.5" fill="#fff" stroke="#555" stroke-width="1.1"/></svg><div class="t" style="left:789.5px;top:175.0px;font-size:9px;color:#333;transform:translateX(-50%);">Yerleştir</div><svg class="a" style="left:786px;top:190px" width="7" height="5"><path d="M1 1 L3.5 4 L6 1" stroke="#444" stroke-width="1" fill="none"/></svg><svg class="a" style="left:811px;top:151px" width="23" height="22"><rect x="1" y="1" width="20" height="20" rx="2" fill="#f4f4f4" stroke="#c4c4c4" stroke-width="1.2"/><path d="M8 19 Q10 13 19 8 Q14 16 10 19Z" fill="#d0d0d0" stroke="#b8b8b8" stroke-width="0.8"/></svg><div class="t" style="left:822px;top:175.0px;font-size:9px;color:#b4b2b1;transform:translateX(-50%);">Hızlı</div><div class="t" style="left:808px;top:186.8px;font-size:9px;color:#b4b2b1;">Stiller</div><svg class="a" style="left:833px;top:191px" width="7" height="5"><path d="M1 1 L3.5 4 L6 1" stroke="#b4b2b1" stroke-width="1" fill="none"/></svg><svg class="a" style="left:841px;top:149px" width="12" height="13"><path d="M2 6 L6 2 L10 6 L6 10Z" fill="none" stroke="#b0b0b0"/><rect x="0" y="10.5" width="12" height="2.2" fill="#b4b4b4"/></svg><div class="t" style="left:854.5px;top:151.2px;font-size:8.4px;color:#b4b2b1;">Şekil Dolgusu</div><svg class="a" style="left:908px;top:155px" width="7" height="5"><path d="M1 1 L3.5 4 L6 1" stroke="#b4b2b1" stroke-width="1" fill="none"/></svg><svg class="a" style="left:841px;top:166px" width="12" height="13"><rect x="0.5" y="0.5" width="10" height="9" fill="none" stroke="#b0b0b0"/><path d="M3 8 L8 3" stroke="#b0b0b0"/><rect x="0" y="10.5" width="12" height="2.2" fill="#b4b4b4"/></svg><div class="t" style="left:854.5px;top:167.6px;font-size:8.4px;color:#b4b2b1;">Şekil Ana Hattı</div><svg class="a" style="left:913px;top:171px" width="7" height="5"><path d="M1 1 L3.5 4 L6 1" stroke="#b4b2b1" stroke-width="1" fill="none"/></svg><svg class="a" style="left:841px;top:183px" width="13" height="12"><path d="M1 7 L6 2 L12 5 L7 10Z" fill="#e0e0e0" stroke="#b0b0b0"/><path d="M1 7 L1 9 L7 12 L12 7" fill="none" stroke="#b0b0b0"/></svg><div class="t" style="left:854.5px;top:184.0px;font-size:8.4px;color:#b4b2b1;">Şekil Efektleri</div><svg class="a" style="left:908px;top:187px" width="7" height="5"><path d="M1 1 L3.5 4 L6 1" stroke="#b4b2b1" stroke-width="1" fill="none"/></svg><svg class="a" style="left:935px;top:149px" width="12" height="12"><circle cx="7.5" cy="4.5" r="3.6" fill="none" stroke="#444" stroke-width="1"/><path d="M5 7 L1 11" stroke="#444" stroke-width="1.2"/></svg><div class="t" style="left:949.5px;top:150.5px;font-size:8.7px;color:#333;">Bul</div><svg class="a" style="left:934px;top:165px" width="14" height="14"><text x="5" y="6" font-size="7" fill="#9a4ad0" font-family="Liberation Sans">b</text><text x="8" y="13" font-size="7" fill="#2a7ad0" font-family="Liberation Sans">c</text><path d="M4 4 Q1 7 3 10 M2 9 L3 11 L5 10" fill="none" stroke="#2a7ad0" stroke-width="0.9"/></svg><div class="t" style="left:949.5px;top:167.3px;font-size:9px;color:#333;">Değiştir</div><svg class="a" style="left:986px;top:171px" width="7" height="5"><path d="M1 1 L3.5 4 L6 1" stroke="#444" stroke-width="1" fill="none"/></svg><svg class="a" style="left:935px;top:182px" width="10" height="14"><path d="M1 1 V12 L4 9 L6 13 L7.5 12.3 L5.5 8.5 H9.5Z" fill="#fff" stroke="#444" stroke-width="0.9"/></svg><div class="t" style="left:949.5px;top:183.8px;font-size:9px;color:#333;">Seç</div><svg class="a" style="left:964.5px;top:188px" width="6" height="5"><path d="M1 1 L3.0 4 L5 1" stroke="#444" stroke-width="1" fill="none"/></svg><svg class="a" style="left:1013px;top:149px" width="17" height="24"><rect x="5" y="1" width="7" height="13" rx="3.5" fill="#7ab8f0" stroke="#2a7ad0" stroke-width="0.8"/><path d="M1.5 10 Q1.5 17 8.5 17 Q15.5 17 15.5 10 M8.5 17 V22" fill="none" stroke="#444" stroke-width="1"/></svg><div class="t" style="left:1021px;top:175.3px;font-size:9px;color:#333;transform:translateX(-50%);">Dikte</div><svg class="a" style="left:1018px;top:190px" width="7" height="5"><path d="M1 1 L3.5 4 L6 1" stroke="#444" stroke-width="1" fill="none"/></svg><svg class="a" style="left:1052px;top:149px" width="23" height="20"><rect x="4" y="4" width="17" height="14" fill="#f0f0f0" stroke="#b4b4b4" stroke-width="1.4"/><path d="M4 8 H21 M15 8 V18" stroke="#b4b4b4"/><path d="M8 0.5 H11 L8 4.5 H10.5 L3.5 11 L6 6 H2.5Z" fill="#c4c4c4" stroke="#b4b4b4" stroke-width="0.6"/></svg><div class="t" style="left:1063.6px;top:175.6px;font-size:8.5px;color:#b4b2b1;transform:translateX(-50%);">Tasarım</div><div class="t" style="left:1063.6px;top:187.1px;font-size:8.5px;color:#b4b2b1;transform:translateX(-50%);">Fikirleri</div><div class="a" style="left:93px;top:216px;width:122px;height:426px;background:#e6e6e6"></div><div class="a" style="left:204.5px;top:216px;width:10.5px;height:426px;background:#e0e0e0"></div><div class="a" style="left:205px;top:216.5px;width:10px;height:10px;background:#fdfdfd"></div><svg class="a" style="left:207px;top:219px" width="7" height="5"><path d="M0 4.5 L3.5 0.5 L7 4.5Z" fill="#666"/></svg><div class="a" style="left:205px;top:295px;width:10px;height:114px;background:#fdfdfd;border:1px solid #c8c8c8"></div><div class="a" style="left:215px;top:216px;width:1px;height:426px;background:#d9d9d9"></div><div class="t" style="left:102.5px;top:225px;font-size:11.3px;color:#666">5</div><div class="a" style="left:118.5px;top:229px;width:71px;height:52.5px;background:#fff;border:0.5px solid #d8d8d8;overflow:hidden"><div class="t" style="left:0;width:71px;text-align:center;top:3.5px;font-size:3.3px;font-weight:bold;color:#c83a3a">Band Theory</div><div class="a" style="left:4.0px;top:8.5px;width:25.0px;height:0.9px;background:#c4c4c4"></div><div class="a" style="left:4.0px;top:11.6px;width:26.2px;height:0.9px;background:#a4a4a4"></div><div class="a" style="left:4.0px;top:13.6px;width:20.6px;height:0.9px;background:#c4c4c4"></div><div class="a" style="left:4.0px;top:16.5px;width:25.7px;height:0.9px;background:#a4a4a4"></div><div class="a" style="left:4.0px;top:18.5px;width:20.7px;height:0.9px;background:#a4a4a4"></div><div class="a" style="left:4.0px;top:20.5px;width:28.0px;height:0.9px;background:#c4c4c4"></div><div class="a" style="left:4.0px;top:23.4px;width:21.2px;height:0.9px;background:#cdcdcd"></div><div class="a" style="left:4.0px;top:25.4px;width:20.9px;height:0.9px;background:#c4c4c4"></div><div class="a" style="left:4.0px;top:28.2px;width:28.7px;height:0.9px;background:#c4c4c4"></div><div class="a" style="left:4.0px;top:30.2px;width:33.2px;height:0.9px;background:#c4c4c4"></div><div class="a" style="left:4.0px;top:32.7px;width:35.1px;height:0.9px;background:#bdbdbd"></div><div class="a" style="left:4.0px;top:35.1px;width:30.0px;height:0.9px;background:#c4c4c4"></div><div class="a" style="left:4.0px;top:37.5px;width:29.1px;height:0.9px;background:#e0b4b4"></div><div class="a" style="left:4.0px;top:40.3px;width:20.6px;height:0.9px;background:#c4c4c4"></div><div class="a" style="left:4.0px;top:42.3px;width:20.6px;height:0.9px;background:#c4c4c4"></div><div class="a" style="left:4.0px;top:44.3px;width:24.5px;height:0.9px;background:#c4c4c4"></div><div class="a" style="left:4.0px;top:47.5px;width:28.6px;height:0.9px;background:#bdbdbd"></div><div class="a" style="left:46px;top:9px;width:21px;height:18px;border-left:0.6px solid #d8d0f0;border-top:0.6px solid #e0e0f0"></div><div class="a" style="left:48.0px;top:14.0px;width:8.0px;height:0.9px;background:#c8c8e8"></div><div class="a" style="left:50.0px;top:20.0px;width:14.0px;height:0.9px;background:#d0c8f0"></div><div class="a" style="left:66px;top:11px;width:2px;height:4px;background:#3a8a5a"></div><div class="a" style="left:47px;top:27.5px;width:16px;height:9.5px;border:0.8px solid #7ad0c0"></div><div class="a" style="left:51.0px;top:32.0px;width:8.0px;height:0.9px;background:#888"></div><div class="a" style="left:46.0px;top:39.5px;width:22.0px;height:0.8px;background:#8a8a8a"></div></div><div class="t" style="left:102.5px;top:292.5px;font-size:11.3px;color:#666">6</div><div class="a" style="left:118.5px;top:296.5px;width:71px;height:52.5px;background:#fff;border:0.5px solid #d8d8d8;overflow:hidden"><div class="t" style="left:0;width:71px;text-align:center;top:3.5px;font-size:3.3px;font-weight:bold;color:#c83a3a">Energy Band Theory</div><div class="a" style="left:6.0px;top:8.5px;width:22.0px;height:0.9px;background:#bdbdbd"></div><div class="a" style="left:6.0px;top:11.0px;width:20.2px;height:0.9px;background:#bdbdbd"></div><div class="a" style="left:6.0px;top:13.0px;width:25.8px;height:0.9px;background:#cdcdcd"></div><div class="a" style="left:6.0px;top:16.0px;width:23.0px;height:0.9px;background:#bdbdbd"></div><div class="a" style="left:6.0px;top:18.5px;width:27.9px;height:0.9px;background:#bdbdbd"></div><div class="a" style="left:6.0px;top:21.0px;width:18.5px;height:0.9px;background:#c4c4c4"></div><div class="a" style="left:6.0px;top:24.0px;width:24.7px;height:0.9px;background:#bdbdbd"></div><div class="a" style="left:6.0px;top:26.5px;width:23.8px;height:0.9px;background:#bdbdbd"></div><div class="a" style="left:6.0px;top:29.0px;width:24.3px;height:0.9px;background:#a4a4a4"></div><div class="a" style="left:6.0px;top:31.5px;width:30.9px;height:0.9px;background:#cdcdcd"></div><div class="a" style="left:6.0px;top:34.0px;width:21.9px;height:0.9px;background:#a4a4a4"></div><div class="a" style="left:6.0px;top:36.5px;width:29.0px;height:0.9px;background:#bdbdbd"></div><div class="a" style="left:6.0px;top:39.0px;width:28.8px;height:0.9px;background:#c4c4c4"></div><div class="a" style="left:6.0px;top:41.5px;width:25.9px;height:0.9px;background:#a4a4a4"></div><div class="a" style="left:4.0px;top:8.1px;width:1.3px;height:1.3px;background:#777"></div><div class="a" style="left:4.0px;top:15.6px;width:1.3px;height:1.3px;background:#777"></div><div class="a" style="left:4.0px;top:23.6px;width:1.3px;height:1.3px;background:#777"></div><div class="a" style="left:4.0px;top:31.1px;width:1.3px;height:1.3px;background:#777"></div><div class="a" style="left:4.0px;top:36.1px;width:1.3px;height:1.3px;background:#777"></div><div class="a" style="left:52.0px;top:9.0px;width:14.0px;height:0.9px;background:#b8b8b8"></div><div class="a" style="left:47.0px;top:13.0px;width:20.0px;height:0.9px;background:#c0c0c0"></div><div class="a" style="left:52.0px;top:19.0px;width:14.0px;height:0.9px;background:#a8a8a8"></div><div class="a" style="left:47.0px;top:22.0px;width:20.0px;height:0.9px;background:#c0c0c0"></div><div class="a" style="left:68.5px;top:16px;width:1.3px;height:5px;background:#4aa070"></div><div class="a" style="left:41px;top:26px;width:2.5px;height:1.5px;background:#6ac0a0"></div><div class="a" style="left:43.0px;top:30.0px;width:19.7px;height:0.9px;background:#cdcdcd"></div><div class="a" style="left:43.0px;top:32.5px;width:22.0px;height:0.9px;background:#cdcdcd"></div><div class="a" style="left:43.0px;top:35.0px;width:20.6px;height:0.9px;background:#c4c4c4"></div><div class="a" style="left:43.0px;top:37.5px;width:15.1px;height:0.9px;background:#cdcdcd"></div><div class="a" style="left:48.0px;top:41.0px;width:10.0px;height:0.9px;background:#c0c0c0"></div></div><div class="t" style="left:102.5px;top:360px;font-size:11.3px;color:#666">7</div><div class="a" style="left:118.5px;top:364px;width:71px;height:52.5px;background:#fff;border:0.5px solid #d8d8d8;overflow:hidden"><div class="t" style="left:0;width:71px;text-align:center;top:3.5px;font-size:3.3px;font-weight:bold;color:#c83a3a">Energy Band for Insulator and SC</div><div class="a" style="left:4.0px;top:7.5px;width:19.4px;height:0.9px;background:#cdcdcd"></div><div class="a" style="left:4.0px;top:9.5px;width:19.2px;height:0.9px;background:#cdcdcd"></div><div class="a" style="left:4.0px;top:11.5px;width:22.9px;height:0.9px;background:#a4a4a4"></div><div class="a" style="left:4.0px;top:13.5px;width:30.5px;height:0.9px;background:#c4c4c4"></div><div class="a" style="left:4.0px;top:15.5px;width:27.7px;height:0.9px;background:#bdbdbd"></div><div class="a" style="left:4.0px;top:17.5px;width:28.1px;height:0.9px;background:#cdcdcd"></div><div class="a" style="left:4.0px;top:19.5px;width:21.8px;height:0.9px;background:#a4a4a4"></div><div class="a" style="left:40.0px;top:8.0px;width:19.1px;height:0.9px;background:#cdcdcd"></div><div class="a" style="left:40.0px;top:10.0px;width:21.9px;height:0.9px;background:#cdcdcd"></div><div class="a" style="left:40.0px;top:12.0px;width:15.7px;height:0.9px;background:#c4c4c4"></div><div class="a" style="left:40.0px;top:14.0px;width:26.3px;height:0.9px;background:#cdcdcd"></div><div class="a" style="left:40.0px;top:16.0px;width:23.3px;height:0.9px;background:#c4c4c4"></div><div class="a" style="left:40.0px;top:18.0px;width:15.6px;height:0.9px;background:#a4a4a4"></div><div class="a" style="left:40.0px;top:20.0px;width:23.4px;height:0.9px;background:#bdbdbd"></div><div class="a" style="left:5.0px;top:27.0px;width:28.0px;height:0.9px;background:#c8c8c8"></div><div class="a" style="left:8.0px;top:25.0px;width:10.0px;height:0.9px;background:#c8c8c8"></div><div class="a" style="left:30.0px;top:31.0px;width:20.0px;height:0.9px;background:#c8c8c8"></div><div class="a" style="left:50.0px;top:28.0px;width:18.0px;height:0.9px;background:#c8c8c8"></div><div class="a" style="left:33px;top:24px;width:0.6px;height:9px;background:#bbb"></div><div class="a" style="left:4.0px;top:37.5px;width:30.8px;height:0.9px;background:#bdbdbd"></div><div class="a" style="left:4.0px;top:40.0px;width:35.0px;height:0.9px;background:#cdcdcd"></div><div class="a" style="left:4.0px;top:42.5px;width:33.2px;height:0.9px;background:#bdbdbd"></div><div class="a" style="left:4.0px;top:45.0px;width:21.3px;height:0.9px;background:#a4a4a4"></div><div class="a" style="left:4.0px;top:47.5px;width:28.8px;height:0.9px;background:#c4c4c4"></div></div><div class="t" style="left:102.5px;top:428px;font-size:11.3px;color:#666">8</div><div class="a" style="left:118.5px;top:432px;width:71px;height:52.5px;background:#fff;border:0.5px solid #d8d8d8;overflow:hidden"><div class="t" style="left:0;width:71px;text-align:center;top:3.5px;font-size:3.3px;font-weight:bold;color:#c83a3a">Density and Band Structure in Semiconductor Materials</div><div class="a" style="left:4.0px;top:8.0px;width:33.0px;height:0.9px;background:#cdcdcd"></div><div class="a" style="left:4.0px;top:10.5px;width:23.1px;height:0.9px;background:#cdcdcd"></div><div class="a" style="left:4.0px;top:13.0px;width:24.3px;height:0.9px;background:#a4a4a4"></div><div class="a" style="left:4.0px;top:15.5px;width:26.5px;height:0.9px;background:#cdcdcd"></div><div class="a" style="left:4.0px;top:18.0px;width:38.5px;height:0.9px;background:#cdcdcd"></div><div class="a" style="left:4.0px;top:20.5px;width:23.5px;height:0.9px;background:#cdcdcd"></div><div class="a" style="left:4.0px;top:23.0px;width:29.2px;height:0.9px;background:#cdcdcd"></div><div class="a" style="left:4.0px;top:25.5px;width:37.9px;height:0.9px;background:#e0b4b4"></div><div class="a" style="left:4.0px;top:28.0px;width:37.6px;height:0.9px;background:#a4a4a4"></div><div class="a" style="left:4.0px;top:30.5px;width:27.0px;height:0.9px;background:#cdcdcd"></div><div class="a" style="left:4.0px;top:33.0px;width:39.8px;height:0.9px;background:#bdbdbd"></div><div class="a" style="left:4.0px;top:35.5px;width:37.9px;height:0.9px;background:#c4c4c4"></div><div class="a" style="left:4.0px;top:38.0px;width:24.7px;height:0.9px;background:#a4a4a4"></div><div class="a" style="left:4.0px;top:40.5px;width:25.2px;height:0.9px;background:#c4c4c4"></div><div class="a" style="left:4.0px;top:43.0px;width:33.9px;height:0.9px;background:#c4c4c4"></div><div class="a" style="left:4.0px;top:45.5px;width:30.7px;height:0.9px;background:#bdbdbd"></div><div class="a" style="left:48.0px;top:9.5px;width:18.0px;height:0.9px;background:#c0a0c0"></div><div class="a" style="left:52px;top:13.0px;width:10px;height:3.5px;border:0.6px solid #999;border-bottom:none"></div><div class="a" style="left:48.0px;top:16.5px;width:18.0px;height:0.6px;background:#aaa"></div><div class="a" style="left:52px;top:19.5px;width:10px;height:3.5px;border:0.6px solid #999;border-bottom:none"></div><div class="a" style="left:48.0px;top:23.0px;width:18.0px;height:0.6px;background:#aaa"></div><div class="a" style="left:52px;top:26.0px;width:10px;height:3.5px;border:0.6px solid #999;border-bottom:none"></div><div class="a" style="left:48.0px;top:29.5px;width:18.0px;height:0.6px;background:#aaa"></div><div class="a" style="left:52px;top:32.5px;width:10px;height:3.5px;border:0.6px solid #999;border-bottom:none"></div><div class="a" style="left:48.0px;top:36.0px;width:18.0px;height:0.6px;background:#aaa"></div></div><div class="t" style="left:102.5px;top:495.5px;font-size:11.3px;color:#c0392b">9</div><div class="a" style="left:118.5px;top:499.5px;width:71px;height:52.5px;background:#fff;border:0.5px solid #d8d8d8;overflow:hidden"><div class="t" style="left:0;width:71px;text-align:center;top:3.5px;font-size:3.3px;font-weight:bold;color:#c83a3a">Crystal Structure and Crystallography</div><div class="a" style="left:4.0px;top:8.0px;width:39.2px;height:0.9px;background:#a4a4a4"></div><div class="a" style="left:4.0px;top:10.0px;width:42.0px;height:0.9px;background:#c4c4c4"></div><div class="a" style="left:4.0px;top:12.0px;width:45.8px;height:0.9px;background:#bdbdbd"></div><div class="a" style="left:4.0px;top:14.0px;width:51.1px;height:0.9px;background:#a4a4a4"></div><div class="a" style="left:4.0px;top:16.0px;width:43.0px;height:0.9px;background:#c4c4c4"></div><div class="a" style="left:4.0px;top:18.0px;width:53.4px;height:0.9px;background:#bdbdbd"></div><div class="a" style="left:4.0px;top:20.0px;width:60.6px;height:0.9px;background:#bdbdbd"></div><div class="a" style="left:4.0px;top:22.0px;width:53.0px;height:0.9px;background:#c4c4c4"></div><div class="a" style="left:4.0px;top:24.0px;width:46.8px;height:0.9px;background:#bdbdbd"></div><div class="a" style="left:4.0px;top:26.0px;width:56.4px;height:0.9px;background:#cdcdcd"></div><div class="a" style="left:14.5px;top:30px;width:31px;height:15px;border:0.7px solid #e08a8a"></div><div class="a" style="left:17.0px;top:32px;width:7px;height:10px;border:0.7px dotted #5060c0"></div><div class="a" style="left:26.5px;top:32px;width:7px;height:10px;border:0.7px dotted #5060c0"></div><div class="a" style="left:36.0px;top:32px;width:7px;height:10px;border:0.7px dotted #5060c0"></div></div><div class="t" style="left:96px;top:563.5px;font-size:11.3px;color:#666">10</div><div class="a" style="left:118.5px;top:567.5px;width:71px;height:52.5px;background:#fff;border:0.5px solid #d8d8d8;overflow:hidden"><div class="t" style="left:0;width:71px;text-align:center;top:3.5px;font-size:3.3px;font-weight:bold;color:#c83a3a">Crystal Planes: Miller Index</div><div class="a" style="left:5.0px;top:10.0px;width:45.2px;height:0.9px;background:#cdcdcd"></div><div class="a" style="left:5.0px;top:12.0px;width:37.0px;height:0.9px;background:#bdbdbd"></div><div class="a" style="left:5.0px;top:14.0px;width:45.3px;height:0.9px;background:#cdcdcd"></div><div class="a" style="left:5.0px;top:16.0px;width:36.0px;height:0.9px;background:#a4a4a4"></div><div class="a" style="left:8px;top:20px;width:5px;height:5px;border:0.6px solid #999"></div><div class="a" style="left:8.5px;top:26.5px;width:4.0px;height:0.6px;background:#ccc"></div><div class="a" style="left:16px;top:20px;width:5px;height:5px;border:0.6px solid #999"></div><div class="a" style="left:16.5px;top:26.5px;width:4.0px;height:0.6px;background:#ccc"></div><div class="a" style="left:23px;top:20px;width:5px;height:5px;border:0.6px solid #999"></div><div class="a" style="left:23.5px;top:26.5px;width:4.0px;height:0.6px;background:#ccc"></div><div class="a" style="left:31px;top:20px;width:5px;height:5px;border:0.6px solid #999"></div><div class="a" style="left:31.5px;top:26.5px;width:4.0px;height:0.6px;background:#ccc"></div><div class="a" style="left:39px;top:20px;width:5px;height:5px;border:0.6px solid #999"></div><div class="a" style="left:39.5px;top:26.5px;width:4.0px;height:0.6px;background:#ccc"></div><div class="a" style="left:4px;top:30px;width:5px;height:5px;border:0.6px solid #999"></div><div class="a" style="left:4.5px;top:36.5px;width:4.0px;height:0.6px;background:#ccc"></div><div class="a" style="left:12px;top:30px;width:5px;height:5px;border:0.6px solid #999"></div><div class="a" style="left:12.5px;top:36.5px;width:4.0px;height:0.6px;background:#ccc"></div><div class="a" style="left:20px;top:30px;width:5px;height:5px;border:0.6px solid #999"></div><div class="a" style="left:20.5px;top:36.5px;width:4.0px;height:0.6px;background:#ccc"></div><div class="a" style="left:28px;top:30px;width:5px;height:5px;border:0.6px solid #999"></div><div class="a" style="left:28.5px;top:36.5px;width:4.0px;height:0.6px;background:#ccc"></div><div class="a" style="left:39px;top:30px;width:5px;height:5px;border:0.6px solid #999"></div><div class="a" style="left:39.5px;top:36.5px;width:4.0px;height:0.6px;background:#ccc"></div><div class="a" style="left:10px;top:41px;width:5px;height:5px;border:0.6px solid #999"></div><div class="a" style="left:10.5px;top:47.5px;width:4.0px;height:0.6px;background:#ccc"></div><div class="a" style="left:18px;top:41px;width:5px;height:5px;border:0.6px solid #999"></div><div class="a" style="left:18.5px;top:47.5px;width:4.0px;height:0.6px;background:#ccc"></div><div class="a" style="left:29px;top:41px;width:5px;height:5px;border:0.6px solid #999"></div><div class="a" style="left:29.5px;top:47.5px;width:4.0px;height:0.6px;background:#ccc"></div><div class="a" style="left:38px;top:41px;width:5px;height:5px;border:0.6px solid #999"></div><div class="a" style="left:38.5px;top:47.5px;width:4.0px;height:0.6px;background:#ccc"></div><div class="a" style="left:50px;top:23px;width:5px;height:5px;background:#999"></div><div class="a" style="left:61px;top:23px;width:7px;height:4px;background:#aaa"></div><div class="a" style="left:55px;top:32px;width:0;height:0;border-left:4px solid transparent;border-right:4px solid transparent;border-bottom:6px solid #aaa"></div><div class="a" style="left:50px;top:42px;width:0;height:0;border-left:8.5px solid transparent;border-right:8.5px solid transparent;border-bottom:8px solid #8a8a8a"></div><div class="a" style="left:47.0px;top:40.5px;width:8.0px;height:1px;background:#555"></div></div><div class="t" style="left:96px;top:631px;font-size:11.3px;color:#666">11</div><div class="a" style="left:118.5px;top:635px;width:71px;height:52.5px;background:#fff;border:0.5px solid #d8d8d8;overflow:hidden"><div class="t" style="left:0;width:71px;text-align:center;top:3.5px;font-size:3.3px;font-weight:bold;color:#c83a3a">Surface Crystallography</div><div class="a" style="left:5.0px;top:10.0px;width:39.9px;height:0.9px;background:#c4c4c4"></div><div class="a" style="left:5.0px;top:12.0px;width:37.2px;height:0.9px;background:#bdbdbd"></div><div class="a" style="left:5.0px;top:14.0px;width:35.6px;height:0.9px;background:#c4c4c4"></div></div><div class="a" style="left:116.5px;top:497.5px;width:75px;height:57px;border:2px solid #8e2a2a"></div><div class="a" style="left:221.5px;top:240px;width:9.5px;height:402px;background:#fff"></div><div class="t" style="left:221.5px;top:246.8px;width:9.5px;height:10px;font-size:7.5px;color:#444;line-height:10px;text-align:center;transform:rotate(-90deg)">9</div><div class="a" style="left:225.7px;top:256.7px;width:1px;height:1px;background:#999"></div><div class="a" style="left:224.7px;top:262.2px;width:3px;height:1px;background:#999"></div><div class="a" style="left:225.7px;top:267.7px;width:1px;height:1px;background:#999"></div><div class="t" style="left:221.5px;top:268.7px;width:9.5px;height:10px;font-size:7.5px;color:#444;line-height:10px;text-align:center;transform:rotate(-90deg)">8</div><div class="a" style="left:225.7px;top:278.7px;width:1px;height:1px;background:#999"></div><div class="a" style="left:224.7px;top:284.2px;width:3px;height:1px;background:#999"></div><div class="a" style="left:225.7px;top:289.7px;width:1px;height:1px;background:#999"></div><div class="t" style="left:221.5px;top:290.6px;width:9.5px;height:10px;font-size:7.5px;color:#444;line-height:10px;text-align:center;transform:rotate(-90deg)">7</div><div class="a" style="left:225.7px;top:300.6px;width:1px;height:1px;background:#999"></div><div class="a" style="left:224.7px;top:306.1px;width:3px;height:1px;background:#999"></div><div class="a" style="left:225.7px;top:311.6px;width:1px;height:1px;background:#999"></div><div class="t" style="left:221.5px;top:312.6px;width:9.5px;height:10px;font-size:7.5px;color:#444;line-height:10px;text-align:center;transform:rotate(-90deg)">6</div><div class="a" style="left:225.7px;top:322.6px;width:1px;height:1px;background:#999"></div><div class="a" style="left:224.7px;top:328.1px;width:3px;height:1px;background:#999"></div><div class="a" style="left:225.7px;top:333.6px;width:1px;height:1px;background:#999"></div><div class="t" style="left:221.5px;top:334.6px;width:9.5px;height:10px;font-size:7.5px;color:#444;line-height:10px;text-align:center;transform:rotate(-90deg)">5</div><div class="a" style="left:225.7px;top:344.5px;width:1px;height:1px;background:#999"></div><div class="a" style="left:224.7px;top:350.0px;width:3px;height:1px;background:#999"></div><div class="a" style="left:225.7px;top:355.5px;width:1px;height:1px;background:#999"></div><div class="t" style="left:221.5px;top:356.5px;width:9.5px;height:10px;font-size:7.5px;color:#444;line-height:10px;text-align:center;transform:rotate(-90deg)">4</div><div class="a" style="left:225.7px;top:366.5px;width:1px;height:1px;background:#999"></div><div class="a" style="left:224.7px;top:372.0px;width:3px;height:1px;background:#999"></div><div class="a" style="left:225.7px;top:377.5px;width:1px;height:1px;background:#999"></div><div class="t" style="left:221.5px;top:378.5px;width:9.5px;height:10px;font-size:7.5px;color:#444;line-height:10px;text-align:center;transform:rotate(-90deg)">3</div><div class="a" style="left:225.7px;top:388.4px;width:1px;height:1px;background:#999"></div><div class="a" style="left:224.7px;top:393.9px;width:3px;height:1px;background:#999"></div><div class="a" style="left:225.7px;top:399.4px;width:1px;height:1px;background:#999"></div><div class="t" style="left:221.5px;top:400.4px;width:9.5px;height:10px;font-size:7.5px;color:#444;line-height:10px;text-align:center;transform:rotate(-90deg)">2</div><div class="a" style="left:225.7px;top:410.4px;width:1px;height:1px;background:#999"></div><div class="a" style="left:224.7px;top:415.9px;width:3px;height:1px;background:#999"></div><div class="a" style="left:225.7px;top:421.4px;width:1px;height:1px;background:#999"></div><div class="t" style="left:221.5px;top:422.4px;width:9.5px;height:10px;font-size:7.5px;color:#444;line-height:10px;text-align:center;transform:rotate(-90deg)">1</div><div class="a" style="left:225.7px;top:432.3px;width:1px;height:1px;background:#999"></div><div class="a" style="left:224.7px;top:437.8px;width:3px;height:1px;background:#999"></div><div class="a" style="left:225.7px;top:443.3px;width:1px;height:1px;background:#999"></div><div class="t" style="left:221.5px;top:444.3px;width:9.5px;height:10px;font-size:7.5px;color:#444;line-height:10px;text-align:center;transform:rotate(-90deg)">0</div><div class="a" style="left:225.7px;top:454.3px;width:1px;height:1px;background:#999"></div><div class="a" style="left:224.7px;top:459.8px;width:3px;height:1px;background:#999"></div><div class="a" style="left:225.7px;top:465.3px;width:1px;height:1px;background:#999"></div><div class="t" style="left:221.5px;top:466.2px;width:9.5px;height:10px;font-size:7.5px;color:#444;line-height:10px;text-align:center;transform:rotate(-90deg)">1</div><div class="a" style="left:225.7px;top:476.2px;width:1px;height:1px;background:#999"></div><div class="a" style="left:224.7px;top:481.7px;width:3px;height:1px;background:#999"></div><div class="a" style="left:225.7px;top:487.2px;width:1px;height:1px;background:#999"></div><div class="t" style="left:221.5px;top:488.2px;width:9.5px;height:10px;font-size:7.5px;color:#444;line-height:10px;text-align:center;transform:rotate(-90deg)">2</div><div class="a" style="left:225.7px;top:498.2px;width:1px;height:1px;background:#999"></div><div class="a" style="left:224.7px;top:503.7px;width:3px;height:1px;background:#999"></div><div class="a" style="left:225.7px;top:509.2px;width:1px;height:1px;background:#999"></div><div class="t" style="left:221.5px;top:510.1px;width:9.5px;height:10px;font-size:7.5px;color:#444;line-height:10px;text-align:center;transform:rotate(-90deg)">3</div><div class="a" style="left:225.7px;top:520.1px;width:1px;height:1px;background:#999"></div><div class="a" style="left:224.7px;top:525.6px;width:3px;height:1px;background:#999"></div><div class="a" style="left:225.7px;top:531.1px;width:1px;height:1px;background:#999"></div><div class="t" style="left:221.5px;top:532.1px;width:9.5px;height:10px;font-size:7.5px;color:#444;line-height:10px;text-align:center;transform:rotate(-90deg)">4</div><div class="a" style="left:225.7px;top:542.1px;width:1px;height:1px;background:#999"></div><div class="a" style="left:224.7px;top:547.6px;width:3px;height:1px;background:#999"></div><div class="a" style="left:225.7px;top:553.1px;width:1px;height:1px;background:#999"></div><div class="t" style="left:221.5px;top:554.0px;width:9.5px;height:10px;font-size:7.5px;color:#444;line-height:10px;text-align:center;transform:rotate(-90deg)">5</div><div class="a" style="left:225.7px;top:564.0px;width:1px;height:1px;background:#999"></div><div class="a" style="left:224.7px;top:569.5px;width:3px;height:1px;background:#999"></div><div class="a" style="left:225.7px;top:575.0px;width:1px;height:1px;background:#999"></div><div class="t" style="left:221.5px;top:576.0px;width:9.5px;height:10px;font-size:7.5px;color:#444;line-height:10px;text-align:center;transform:rotate(-90deg)">6</div><div class="a" style="left:225.7px;top:586.0px;width:1px;height:1px;background:#999"></div><div class="a" style="left:224.7px;top:591.5px;width:3px;height:1px;background:#999"></div><div class="a" style="left:225.7px;top:597.0px;width:1px;height:1px;background:#999"></div><div class="t" style="left:221.5px;top:598.0px;width:9.5px;height:10px;font-size:7.5px;color:#444;line-height:10px;text-align:center;transform:rotate(-90deg)">7</div><div class="a" style="left:225.7px;top:607.9px;width:1px;height:1px;background:#999"></div><div class="a" style="left:224.7px;top:613.4px;width:3px;height:1px;background:#999"></div><div class="a" style="left:225.7px;top:618.9px;width:1px;height:1px;background:#999"></div><div class="t" style="left:221.5px;top:619.9px;width:9.5px;height:10px;font-size:7.5px;color:#444;line-height:10px;text-align:center;transform:rotate(-90deg)">8</div><div class="a" style="left:225.7px;top:629.9px;width:1px;height:1px;background:#999"></div><div class="a" style="left:224.7px;top:635.4px;width:3px;height:1px;background:#999"></div><div class="a" style="left:225.7px;top:640.9px;width:1px;height:1px;background:#999"></div><div class="a" style="left:427px;top:217px;width:558px;height:10px;background:#fff"></div><div class="t" style="left:436.2px;top:217.6px;width:12px;font-size:8.2px;color:#444;line-height:10px;text-align:center">12</div><div class="a" style="left:447.2px;top:221.5px;width:1px;height:1px;background:#999"></div><div class="a" style="left:436.2px;top:221.5px;width:1px;height:1px;background:#999"></div><div class="a" style="left:452.7px;top:220.5px;width:1px;height:3px;background:#999"></div><div class="a" style="left:430.7px;top:220.5px;width:1px;height:3px;background:#999"></div><div class="a" style="left:458.2px;top:221.5px;width:1px;height:1px;background:#999"></div><div class="t" style="left:458.2px;top:217.6px;width:12px;font-size:8.2px;color:#444;line-height:10px;text-align:center">11</div><div class="a" style="left:469.1px;top:221.5px;width:1px;height:1px;background:#999"></div><div class="a" style="left:474.6px;top:220.5px;width:1px;height:3px;background:#999"></div><div class="a" style="left:480.1px;top:221.5px;width:1px;height:1px;background:#999"></div><div class="t" style="left:480.1px;top:217.6px;width:12px;font-size:8.2px;color:#444;line-height:10px;text-align:center">10</div><div class="a" style="left:491.1px;top:221.5px;width:1px;height:1px;background:#999"></div><div class="a" style="left:496.6px;top:220.5px;width:1px;height:3px;background:#999"></div><div class="a" style="left:502.1px;top:221.5px;width:1px;height:1px;background:#999"></div><div class="t" style="left:502.0px;top:217.6px;width:12px;font-size:8.2px;color:#444;line-height:10px;text-align:center">9</div><div class="a" style="left:513.0px;top:221.5px;width:1px;height:1px;background:#999"></div><div class="a" style="left:518.5px;top:220.5px;width:1px;height:3px;background:#999"></div><div class="a" style="left:524.0px;top:221.5px;width:1px;height:1px;background:#999"></div><div class="t" style="left:524.0px;top:217.6px;width:12px;font-size:8.2px;color:#444;line-height:10px;text-align:center">8</div><div class="a" style="left:535.0px;top:221.5px;width:1px;height:1px;background:#999"></div><div class="a" style="left:540.5px;top:220.5px;width:1px;height:3px;background:#999"></div><div class="a" style="left:545.9px;top:221.5px;width:1px;height:1px;background:#999"></div><div class="t" style="left:545.9px;top:217.6px;width:12px;font-size:8.2px;color:#444;line-height:10px;text-align:center">7</div><div class="a" style="left:556.9px;top:221.5px;width:1px;height:1px;background:#999"></div><div class="a" style="left:562.4px;top:220.5px;width:1px;height:3px;background:#999"></div><div class="a" style="left:567.9px;top:221.5px;width:1px;height:1px;background:#999"></div><div class="t" style="left:567.9px;top:217.6px;width:12px;font-size:8.2px;color:#444;line-height:10px;text-align:center">6</div><div class="a" style="left:578.8px;top:221.5px;width:1px;height:1px;background:#999"></div><div class="a" style="left:584.3px;top:220.5px;width:1px;height:3px;background:#999"></div><div class="a" style="left:589.8px;top:221.5px;width:1px;height:1px;background:#999"></div><div class="t" style="left:589.8px;top:217.6px;width:12px;font-size:8.2px;color:#444;line-height:10px;text-align:center">5</div><div class="a" style="left:600.8px;top:221.5px;width:1px;height:1px;background:#999"></div><div class="a" style="left:606.3px;top:220.5px;width:1px;height:3px;background:#999"></div><div class="a" style="left:611.8px;top:221.5px;width:1px;height:1px;background:#999"></div><div class="t" style="left:611.7px;top:217.6px;width:12px;font-size:8.2px;color:#444;line-height:10px;text-align:center">4</div><div class="a" style="left:622.7px;top:221.5px;width:1px;height:1px;background:#999"></div><div class="a" style="left:628.2px;top:220.5px;width:1px;height:3px;background:#999"></div><div class="a" style="left:633.7px;top:221.5px;width:1px;height:1px;background:#999"></div><div class="t" style="left:633.7px;top:217.6px;width:12px;font-size:8.2px;color:#444;line-height:10px;text-align:center">3</div><div class="a" style="left:644.7px;top:221.5px;width:1px;height:1px;background:#999"></div><div class="a" style="left:650.1px;top:220.5px;width:1px;height:3px;background:#999"></div><div class="a" style="left:655.6px;top:221.5px;width:1px;height:1px;background:#999"></div><div class="t" style="left:655.6px;top:217.6px;width:12px;font-size:8.2px;color:#444;line-height:10px;text-align:center">2</div><div class="a" style="left:666.6px;top:221.5px;width:1px;height:1px;background:#999"></div><div class="a" style="left:672.1px;top:220.5px;width:1px;height:3px;background:#999"></div><div class="a" style="left:677.6px;top:221.5px;width:1px;height:1px;background:#999"></div><div class="t" style="left:677.6px;top:217.6px;width:12px;font-size:8.2px;color:#444;line-height:10px;text-align:center">1</div><div class="a" style="left:688.5px;top:221.5px;width:1px;height:1px;background:#999"></div><div class="a" style="left:694.0px;top:220.5px;width:1px;height:3px;background:#999"></div><div class="a" style="left:699.5px;top:221.5px;width:1px;height:1px;background:#999"></div><div class="t" style="left:699.5px;top:217.6px;width:12px;font-size:8.2px;color:#444;line-height:10px;text-align:center">0</div><div class="a" style="left:710.5px;top:221.5px;width:1px;height:1px;background:#999"></div><div class="a" style="left:716.0px;top:220.5px;width:1px;height:3px;background:#999"></div><div class="a" style="left:721.5px;top:221.5px;width:1px;height:1px;background:#999"></div><div class="t" style="left:721.4px;top:217.6px;width:12px;font-size:8.2px;color:#444;line-height:10px;text-align:center">1</div><div class="a" style="left:732.4px;top:221.5px;width:1px;height:1px;background:#999"></div><div class="a" style="left:737.9px;top:220.5px;width:1px;height:3px;background:#999"></div><div class="a" style="left:743.4px;top:221.5px;width:1px;height:1px;background:#999"></div><div class="t" style="left:743.4px;top:217.6px;width:12px;font-size:8.2px;color:#444;line-height:10px;text-align:center">2</div><div class="a" style="left:754.4px;top:221.5px;width:1px;height:1px;background:#999"></div><div class="a" style="left:759.9px;top:220.5px;width:1px;height:3px;background:#999"></div><div class="a" style="left:765.3px;top:221.5px;width:1px;height:1px;background:#999"></div><div class="t" style="left:765.3px;top:217.6px;width:12px;font-size:8.2px;color:#444;line-height:10px;text-align:center">3</div><div class="a" style="left:776.3px;top:221.5px;width:1px;height:1px;background:#999"></div><div class="a" style="left:781.8px;top:220.5px;width:1px;height:3px;background:#999"></div><div class="a" style="left:787.3px;top:221.5px;width:1px;height:1px;background:#999"></div><div class="t" style="left:787.3px;top:217.6px;width:12px;font-size:8.2px;color:#444;line-height:10px;text-align:center">4</div><div class="a" style="left:798.2px;top:221.5px;width:1px;height:1px;background:#999"></div><div class="a" style="left:803.7px;top:220.5px;width:1px;height:3px;background:#999"></div><div class="a" style="left:809.2px;top:221.5px;width:1px;height:1px;background:#999"></div><div class="t" style="left:809.2px;top:217.6px;width:12px;font-size:8.2px;color:#444;line-height:10px;text-align:center">5</div><div class="a" style="left:820.2px;top:221.5px;width:1px;height:1px;background:#999"></div><div class="a" style="left:825.7px;top:220.5px;width:1px;height:3px;background:#999"></div><div class="a" style="left:831.2px;top:221.5px;width:1px;height:1px;background:#999"></div><div class="t" style="left:831.1px;top:217.6px;width:12px;font-size:8.2px;color:#444;line-height:10px;text-align:center">6</div><div class="a" style="left:842.1px;top:221.5px;width:1px;height:1px;background:#999"></div><div class="a" style="left:847.6px;top:220.5px;width:1px;height:3px;background:#999"></div><div class="a" style="left:853.1px;top:221.5px;width:1px;height:1px;background:#999"></div><div class="t" style="left:853.1px;top:217.6px;width:12px;font-size:8.2px;color:#444;line-height:10px;text-align:center">7</div><div class="a" style="left:864.1px;top:221.5px;width:1px;height:1px;background:#999"></div><div class="a" style="left:869.6px;top:220.5px;width:1px;height:3px;background:#999"></div><div class="a" style="left:875.0px;top:221.5px;width:1px;height:1px;background:#999"></div><div class="t" style="left:875.0px;top:217.6px;width:12px;font-size:8.2px;color:#444;line-height:10px;text-align:center">8</div><div class="a" style="left:886.0px;top:221.5px;width:1px;height:1px;background:#999"></div><div class="a" style="left:891.5px;top:220.5px;width:1px;height:3px;background:#999"></div><div class="a" style="left:897.0px;top:221.5px;width:1px;height:1px;background:#999"></div><div class="t" style="left:897.0px;top:217.6px;width:12px;font-size:8.2px;color:#444;line-height:10px;text-align:center">9</div><div class="a" style="left:907.9px;top:221.5px;width:1px;height:1px;background:#999"></div><div class="a" style="left:913.4px;top:220.5px;width:1px;height:3px;background:#999"></div><div class="a" style="left:918.9px;top:221.5px;width:1px;height:1px;background:#999"></div><div class="t" style="left:918.9px;top:217.6px;width:12px;font-size:8.2px;color:#444;line-height:10px;text-align:center">10</div><div class="a" style="left:929.9px;top:221.5px;width:1px;height:1px;background:#999"></div><div class="a" style="left:935.4px;top:220.5px;width:1px;height:3px;background:#999"></div><div class="a" style="left:940.9px;top:221.5px;width:1px;height:1px;background:#999"></div><div class="t" style="left:940.8px;top:217.6px;width:12px;font-size:8.2px;color:#444;line-height:10px;text-align:center">11</div><div class="a" style="left:951.8px;top:221.5px;width:1px;height:1px;background:#999"></div><div class="a" style="left:957.3px;top:220.5px;width:1px;height:3px;background:#999"></div><div class="a" style="left:962.8px;top:221.5px;width:1px;height:1px;background:#999"></div><div class="t" style="left:962.8px;top:217.6px;width:12px;font-size:8.2px;color:#444;line-height:10px;text-align:center">12</div><div class="a" style="left:973.8px;top:221.5px;width:1px;height:1px;background:#999"></div><div class="a" style="left:979.2px;top:220.5px;width:1px;height:3px;background:#999"></div><div class="a" style="left:1175px;top:216px;width:12px;height:426px;background:#e0e0e0"></div><div class="a" style="left:1175.5px;top:216.5px;width:10.5px;height:10.5px;background:#fdfdfd"></div><svg class="a" style="left:1177.5px;top:219.5px" width="7" height="5"><path d="M0 4.5 L3.5 0.5 L7 4.5Z" fill="#666"/></svg><div class="a" style="left:1175px;top:352px;width:10px;height:16px;background:#fdfdfd;border:1px solid #c8c8c8"></div><div class="a" style="left:1175.5px;top:620.5px;width:10.5px;height:10px;background:#fdfdfd"></div><svg class="a" style="left:1177.5px;top:623.5px" width="7" height="5"><path d="M0 0.5 L3.5 4 L7 0.5Z" fill="#555"/></svg><svg class="a" style="left:1177.5px;top:633px" width="7" height="8"><path d="M0.5 3.5 L3.5 0.5 L6.5 3.5Z" fill="#666"/><path d="M0.5 4.5 H6.5 M0.5 7.5 L3.5 5 L6.5 7.5Z" stroke="#666" stroke-width="0.8" fill="#666"/></svg><div class="a" style="left:426px;top:239px;width:560px;height:403px;background:#fff;border:1px solid #d6d6d6;border-bottom:none"></div><div class="t" style="left:483.5px;top:266.5px;font-family:'Liberation Serif',serif;font-weight:bold;font-size:27.9px;line-height:32px;color:#a81418">Crystal Structure and Crystallography</div><div class="t" style="left:445.4px;top:318.7px;font-family:'Liberation Serif',serif;font-size:15.45px;line-height:18.54px;color:#141414"><b>Crystal Structures:</b> An ideal crystal is constructed by the infinite repetition of<br><span class="r">identical atoms</span>. A group is called the <span class="r">basis</span>.<br>The set of mathematical points to which the basis is attached is called the <span class="r">lattice</span>.<br>The lattice in 3D may be defined by translation vectors: <b><i>a<sub>1</sub>, a<sub>2</sub> and a<sub>3</sub></i></b>.<br>Groups of lattices can be classified into seven crystal systems and <span class="r">14 Braves</span><br><span class="r">lattices</span>, which represent the translational symmetry of a crystal.<br>There is always one lattice point per primitive cell which is at the point of eight<br>corners. The points of lattice is shared among eight cells. 8x1/8=1</div><svg class="a" style="left:530px;top:475px" width="270" height="135" viewBox="530 475 270 135"><rect x="544.5" y="484.5" width="242" height="113.5" fill="#fff" stroke="#d08080" stroke-width="1"/><text x="666" y="494.5" text-anchor="middle" font-family="Liberation Serif" font-weight="bold" font-size="8.9" fill="#222">Crystal lattice examples</text><line x1="564.8" y1="511.9" x2="565.2" y2="552" stroke="#8a9a8a" stroke-width="0.8" stroke-dasharray="1.2 1.2"/><line x1="565.2" y1="552" x2="606.6" y2="552" stroke="#8a9a8a" stroke-width="0.8" stroke-dasharray="1.2 1.2"/><line x1="565.2" y1="552" x2="553.8" y2="564.7" stroke="#8a9a8a" stroke-width="0.8" stroke-dasharray="1.2 1.2"/><line x1="564.8" y1="511.9" x2="580" y2="537.9" stroke="#7a8a7a" stroke-width="0.8"/><line x1="580" y1="537.9" x2="595" y2="564.7" stroke="#7a8a7a" stroke-width="0.8"/><line x1="606.6" y1="511.9" x2="580" y2="537.9" stroke="#7a8a7a" stroke-width="0.8"/><line x1="580" y1="537.9" x2="553.8" y2="564.7" stroke="#7a8a7a" stroke-width="0.8"/><line x1="553.8" y1="524" x2="580" y2="537.9" stroke="#7a8a7a" stroke-width="0.8"/><line x1="580" y1="537.9" x2="606.6" y2="552" stroke="#7a8a7a" stroke-width="0.8"/><line x1="595" y1="524" x2="580" y2="537.9" stroke="#7a8a7a" stroke-width="0.8"/><line x1="580" y1="537.9" x2="565.2" y2="552" stroke="#7a8a7a" stroke-width="0.8"/><line x1="564.8" y1="511.9" x2="606.6" y2="511.9" stroke="#5a955a" stroke-width="1.3"/><line x1="553.8" y1="524" x2="595" y2="524" stroke="#5a955a" stroke-width="1.3"/><line x1="564.8" y1="511.9" x2="553.8" y2="524" stroke="#5a955a" stroke-width="1.3"/><line x1="606.6" y1="511.9" x2="595" y2="524" stroke="#5a955a" stroke-width="1.3"/><line x1="553.8" y1="524" x2="553.8" y2="564.7" stroke="#5a955a" stroke-width="1.3"/><line x1="595" y1="524" x2="595" y2="564.7" stroke="#5a955a" stroke-width="1.3"/><line x1="606.6" y1="511.9" x2="606.6" y2="552" stroke="#5a955a" stroke-width="1.3"/><line x1="553.8" y1="564.7" x2="595" y2="564.7" stroke="#5a955a" stroke-width="1.3"/><line x1="595" y1="564.7" x2="606.6" y2="552" stroke="#5a955a" stroke-width="1.3"/><circle cx="564.8" cy="511.9" r="3.35" fill="#0c0c96"/><circle cx="606.6" cy="511.9" r="3.35" fill="#0c0c96"/><circle cx="553.8" cy="524" r="3.35" fill="#0c0c96"/><circle cx="595" cy="524" r="3.35" fill="#0c0c96"/><circle cx="580" cy="537.9" r="3.35" fill="#0c0c96"/><circle cx="565.2" cy="552" r="3.35" fill="#0c0c96"/><circle cx="606.6" cy="552" r="3.35" fill="#0c0c96"/><circle cx="553.8" cy="564.7" r="3.35" fill="#0c0c96"/><circle cx="595" cy="564.7" r="3.35" fill="#0c0c96"/><line x1="655.1" y1="511.9" x2="655.1" y2="552" stroke="#8a9a8a" stroke-width="0.8" stroke-dasharray="1.2 1.2"/><line x1="655.1" y1="552" x2="696.7" y2="552" stroke="#8a9a8a" stroke-width="0.8" stroke-dasharray="1.2 1.2"/><line x1="655.1" y1="552" x2="643.9" y2="564.7" stroke="#8a9a8a" stroke-width="0.8" stroke-dasharray="1.2 1.2"/><line x1="655.1" y1="511.9" x2="685" y2="524" stroke="#7a8a7a" stroke-width="0.7"/><line x1="643.9" y1="524" x2="696.7" y2="511.9" stroke="#7a8a7a" stroke-width="0.7"/><line x1="643.9" y1="524" x2="685" y2="564.7" stroke="#7a8a7a" stroke-width="0.7"/><line x1="685" y1="524" x2="643.9" y2="564.7" stroke="#7a8a7a" stroke-width="0.7"/><line x1="696.7" y1="511.9" x2="685" y2="564.7" stroke="#7a8a7a" stroke-width="0.7"/><line x1="685" y1="524" x2="696.7" y2="552" stroke="#7a8a7a" stroke-width="0.7"/><line x1="643.9" y1="524" x2="655.1" y2="552" stroke="#7a8a7a" stroke-width="0.7"/><line x1="655.1" y1="511.9" x2="643.9" y2="564.7" stroke="#7a8a7a" stroke-width="0.7"/><line x1="655.1" y1="511.9" x2="696.7" y2="552" stroke="#7a8a7a" stroke-width="0.7"/><line x1="696.7" y1="511.9" x2="655.1" y2="552" stroke="#7a8a7a" stroke-width="0.7"/><line x1="643.9" y1="564.7" x2="696.7" y2="552" stroke="#7a8a7a" stroke-width="0.7"/><line x1="685" y1="564.7" x2="655.1" y2="552" stroke="#7a8a7a" stroke-width="0.7"/><line x1="655.1" y1="511.9" x2="696.7" y2="511.9" stroke="#5a955a" stroke-width="1.3"/><line x1="643.9" y1="524" x2="685" y2="524" stroke="#5a955a" stroke-width="1.3"/><line x1="655.1" y1="511.9" x2="643.9" y2="524" stroke="#5a955a" stroke-width="1.3"/><line x1="696.7" y1="511.9" x2="685" y2="524" stroke="#5a955a" stroke-width="1.3"/><line x1="643.9" y1="524" x2="643.9" y2="564.7" stroke="#5a955a" stroke-width="1.3"/><line x1="685" y1="524" x2="685" y2="564.7" stroke="#5a955a" stroke-width="1.3"/><line x1="696.7" y1="511.9" x2="696.7" y2="552" stroke="#5a955a" stroke-width="1.3"/><line x1="643.9" y1="564.7" x2="685" y2="564.7" stroke="#5a955a" stroke-width="1.3"/><line x1="685" y1="564.7" x2="696.7" y2="552" stroke="#5a955a" stroke-width="1.3"/><circle cx="655.1" cy="511.9" r="3.35" fill="#0c0c96"/><circle cx="696.7" cy="511.9" r="3.35" fill="#0c0c96"/><circle cx="643.9" cy="524" r="3.35" fill="#0c0c96"/><circle cx="685" cy="524" r="3.35" fill="#0c0c96"/><circle cx="655.1" cy="552" r="3.35" fill="#0c0c96"/><circle cx="696.7" cy="552" r="3.35" fill="#0c0c96"/><circle cx="643.9" cy="564.7" r="3.35" fill="#0c0c96"/><circle cx="685" cy="564.7" r="3.35" fill="#0c0c96"/><circle cx="669.9" cy="517.8" r="3.35" fill="#0c0c96"/><circle cx="664" cy="543.6" r="3.35" fill="#0c0c96"/><circle cx="675.6" cy="532.4" r="3.35" fill="#0c0c96"/><circle cx="649.2" cy="537.9" r="3.35" fill="#0c0c96"/><circle cx="691" cy="537.9" r="3.35" fill="#0c0c96"/><circle cx="669.2" cy="558.3" r="3.35" fill="#0c0c96"/><line x1="736.8" y1="501.8" x2="738.4" y2="541" stroke="#8a9a8a" stroke-width="0.8" stroke-dasharray="1.2 1.2"/><line x1="763.8" y1="501.8" x2="763.8" y2="541" stroke="#8a9a8a" stroke-width="0.8" stroke-dasharray="1.2 1.2"/><line x1="724.1" y1="554.7" x2="738.4" y2="541" stroke="#8a9a8a" stroke-width="0.8" stroke-dasharray="1.2 1.2"/><line x1="738.4" y1="541" x2="763.8" y2="541" stroke="#8a9a8a" stroke-width="0.8" stroke-dasharray="1.2 1.2"/><line x1="763.8" y1="541" x2="776.8" y2="554.1" stroke="#8a9a8a" stroke-width="0.8" stroke-dasharray="1.2 1.2"/><line x1="749" y1="515.1" x2="736.8" y2="501.8" stroke="#7a8a7a" stroke-width="0.8"/><line x1="750" y1="553.5" x2="738.4" y2="541" stroke="#7a8a7a" stroke-width="0.8"/><line x1="749" y1="515.1" x2="763.8" y2="501.8" stroke="#7a8a7a" stroke-width="0.8"/><line x1="750" y1="553.5" x2="763.8" y2="541" stroke="#7a8a7a" stroke-width="0.8"/><line x1="749" y1="515.1" x2="776.8" y2="515.1" stroke="#7a8a7a" stroke-width="0.8"/><line x1="750" y1="553.5" x2="776.8" y2="554.1" stroke="#7a8a7a" stroke-width="0.8"/><line x1="749" y1="515.1" x2="763.8" y2="525.2" stroke="#7a8a7a" stroke-width="0.8"/><line x1="750" y1="553.5" x2="763.8" y2="565" stroke="#7a8a7a" stroke-width="0.8"/><line x1="749" y1="515.1" x2="738.4" y2="525.2" stroke="#7a8a7a" stroke-width="0.8"/><line x1="750" y1="553.5" x2="738.9" y2="565" stroke="#7a8a7a" stroke-width="0.8"/><line x1="749" y1="515.1" x2="724.1" y2="515.1" stroke="#7a8a7a" stroke-width="0.8"/><line x1="750" y1="553.5" x2="724.1" y2="554.7" stroke="#7a8a7a" stroke-width="0.8"/><line x1="736.8" y1="501.8" x2="763.8" y2="501.8" stroke="#5a955a" stroke-width="1.3"/><line x1="763.8" y1="501.8" x2="776.8" y2="515.1" stroke="#5a955a" stroke-width="1.3"/><line x1="776.8" y1="515.1" x2="763.8" y2="525.2" stroke="#5a955a" stroke-width="1.3"/><line x1="763.8" y1="525.2" x2="738.4" y2="525.2" stroke="#5a955a" stroke-width="1.3"/><line x1="738.4" y1="525.2" x2="724.1" y2="515.1" stroke="#5a955a" stroke-width="1.3"/><line x1="724.1" y1="515.1" x2="736.8" y2="501.8" stroke="#5a955a" stroke-width="1.3"/><line x1="776.8" y1="554.1" x2="763.8" y2="565" stroke="#5a955a" stroke-width="1.3"/><line x1="763.8" y1="565" x2="738.9" y2="565" stroke="#5a955a" stroke-width="1.3"/><line x1="738.9" y1="565" x2="724.1" y2="554.7" stroke="#5a955a" stroke-width="1.3"/><line x1="776.8" y1="515.1" x2="776.8" y2="554.1" stroke="#5a955a" stroke-width="1.3"/><line x1="763.8" y1="525.2" x2="763.8" y2="565" stroke="#5a955a" stroke-width="1.3"/><line x1="738.4" y1="525.2" x2="738.9" y2="565" stroke="#5a955a" stroke-width="1.3"/><line x1="724.1" y1="515.1" x2="724.1" y2="554.7" stroke="#5a955a" stroke-width="1.3"/><circle cx="736.8" cy="501.8" r="3.35" fill="#0c0c96"/><circle cx="763.8" cy="501.8" r="3.35" fill="#0c0c96"/><circle cx="776.8" cy="515.1" r="3.35" fill="#0c0c96"/><circle cx="763.8" cy="525.2" r="3.35" fill="#0c0c96"/><circle cx="738.4" cy="525.2" r="3.35" fill="#0c0c96"/><circle cx="724.1" cy="515.1" r="3.35" fill="#0c0c96"/><circle cx="749" cy="515.1" r="3.35" fill="#0c0c96"/><circle cx="738.4" cy="541" r="3.35" fill="#0c0c96"/><circle cx="763.8" cy="541" r="3.35" fill="#0c0c96"/><circle cx="776.8" cy="554.1" r="3.35" fill="#0c0c96"/><circle cx="763.8" cy="565" r="3.35" fill="#0c0c96"/><circle cx="738.9" cy="565" r="3.35" fill="#0c0c96"/><circle cx="724.1" cy="554.7" r="3.35" fill="#0c0c96"/><circle cx="750" cy="553.5" r="3.35" fill="#0c0c96"/><text x="590.5" y="577.5" text-anchor="middle" font-family="Liberation Serif" font-size="7.3" fill="#222" font-weight="bold">Cubic body centered (bcc)</text><text x="676.6" y="577.5" text-anchor="middle" font-family="Liberation Serif" font-size="7.3" fill="#222" font-weight="bold">Cubic face centered (fcc)</text><text x="753.6" y="577.5" text-anchor="middle" font-family="Liberation Serif" font-size="7.3" fill="#222" font-weight="bold">Hexagonal</text><text x="582" y="593.8" text-anchor="middle" font-family="Liberation Serif" font-size="7.3" fill="#222" font-weight="bold">Fe, V, Nb, Cr</text><text x="673.5" y="593.8" text-anchor="middle" font-family="Liberation Serif" font-size="7.3" fill="#222" font-weight="bold">Al, Ni, Ag, Cu, Au</text><text x="750.5" y="593.8" text-anchor="middle" font-family="Liberation Serif" font-size="7.3" fill="#222" font-weight="bold">Ti, Zn, Mg, Cd</text></svg><svg class="a" style="left:782.3px;top:431px" width="9" height="12"><path d="M0.5 0.5 V9 L2.8 7 L4.5 10.5 L6 9.8 L4.3 6.5 H7.5Z" fill="#fff" stroke="#666" stroke-width="0.7"/></svg><div class="a" style="left:0;top:642px;width:1280px;height:45px;background:#1a1a1a"></div><svg class="a" style="left:38px;top:646px" width="16" height="22"><rect x="4.5" y="1" width="7" height="12" rx="3.5" fill="#cfcfcf"/><path d="M1.5 9 Q1.5 16 8 16 Q14.5 16 14.5 9 M8 16 V20 M5 20.5 H11" fill="none" stroke="#cfcfcf" stroke-width="1.3"/></svg><div class="t" style="left:47px;top:672.3px;font-size:10.3px;color:#d0d0d0;transform:translateX(-50%);-webkit-text-stroke:0.3px #d0d0d0">Выключить звук</div><svg class="a" style="left:78px;top:655px" width="8" height="5"><path d="M0.5 4.5 L4 1 L7.5 4.5" stroke="#ccc" stroke-width="1.2" fill="none"/></svg><svg class="a" style="left:130px;top:646px" width="24" height="22"><rect x="2" y="5" width="14" height="12" rx="1.5" fill="#cfcfcf"/><path d="M16 9 L22 6 V16 L16 13Z" fill="#cfcfcf"/><path d="M2.5 20 L21 2" stroke="#d9534f" stroke-width="1.5"/></svg><div class="t" style="left:141px;top:672.3px;font-size:10.3px;color:#d0d0d0;transform:translateX(-50%);-webkit-text-stroke:0.3px #d0d0d0">Включить видео</div><svg class="a" style="left:176px;top:655px" width="8" height="5"><path d="M0.5 4.5 L4 1 L7.5 4.5" stroke="#ccc" stroke-width="1.2" fill="none"/></svg><svg class="a" style="left:522px;top:649px" width="22" height="16"><circle cx="7" cy="4" r="3.3" fill="#cfcfcf"/><path d="M0.5 15 Q0.5 8.5 7 8.5 Q13.5 8.5 13.5 15Z" fill="#cfcfcf"/><circle cx="15" cy="4" r="3" fill="#cfcfcf"/><path d="M14 8.6 Q21 8.3 21.5 15 H15Z" fill="#cfcfcf"/></svg><div class="t" style="left:547.5px;top:650.4px;font-size:10.5px;color:#d0d0d0;">11</div><svg class="a" style="left:574px;top:655px" width="8" height="5"><path d="M0.5 4.5 L4 1 L7.5 4.5" stroke="#ccc" stroke-width="1.2" fill="none"/></svg><div class="t" style="left:533px;top:672.3px;font-size:10.3px;color:#d0d0d0;transform:translateX(-50%);-webkit-text-stroke:0.3px #d0d0d0">Участники</div><svg class="a" style="left:612px;top:648px" width="20" height="18"><path d="M1 3 Q1 1 3 1 H15 Q17 1 17 3 V10 Q17 12 15 12 H7 L3 16 V12 H3 Q1 12 1 10Z" fill="#cfcfcf"/></svg><div class="a" style="left:624px;top:645px;width:14px;height:12px;border-radius:5px;background:#e0282e"></div><div class="t" style="left:631px;top:646.0px;font-size:9px;color:#fff;transform:translateX(-50%);font-weight:bold">1</div><div class="t" style="left:621.5px;top:672.3px;font-size:10.3px;color:#d0d0d0;transform:translateX(-50%);-webkit-text-stroke:0.3px #d0d0d0">Чат</div><div class="a" style="left:704px;top:650px;width:20px;height:14px;border-radius:2px;background:#22c55e"></div><svg class="a" style="left:709px;top:652px" width="10" height="10"><path d="M5 9 V2 M2 4.5 L5 1.5 L8 4.5" stroke="#0a2a10" stroke-width="1.5" fill="none"/></svg><div class="t" style="left:713.7px;top:672.3px;font-size:10.3px;color:#2ecc64;transform:translateX(-50%);-webkit-text-stroke:0.3px #2ecc64">Демонстрация экрана</div><svg class="a" style="left:796px;top:647px" width="20" height="20"><circle cx="10" cy="10" r="8.5" fill="none" stroke="#c4c4c4" stroke-width="1.5"/><circle cx="10" cy="10" r="6" fill="#b4b4b4"/></svg><div class="t" style="left:806.5px;top:672.3px;font-size:10.3px;color:#d0d0d0;transform:translateX(-50%);-webkit-text-stroke:0.3px #d0d0d0">Запись</div><svg class="a" style="left:863px;top:645px" width="22" height="22"><circle cx="9.5" cy="12" r="7.5" fill="#cfcfcf"/><circle cx="7" cy="10.5" r="1" fill="#1a1a1a"/><circle cx="12" cy="10.5" r="1" fill="#1a1a1a"/><path d="M6 13.5 Q9.5 17 13 13.5" stroke="#1a1a1a" stroke-width="1.1" fill="none"/><path d="M17 1 V7 M14 4 H20" stroke="#cfcfcf" stroke-width="1.3"/></svg><div class="t" style="left:872.8px;top:672.3px;font-size:10.3px;color:#d0d0d0;transform:translateX(-50%);-webkit-text-stroke:0.3px #d0d0d0">Реакции</div><div class="a" style="left:1219px;top:653.5px;width:51px;height:23px;border-radius:5px;background:#c9302c"></div><div class="t" style="left:1244.5px;top:659.5px;font-size:9.5px;color:#fff;transform:translateX(-50%);font-weight:bold">Выйти</div><div class="a" style="left:0;top:687px;width:1280px;height:33px;background:linear-gradient(90deg,#243a43 0%,#223641 35%,#1f3042 60%,#1c2a48 85%,#1b2849 100%)"></div><svg class="a" style="left:13px;top:697px" width="14" height="14"><rect x="0" y="0.8" width="6.3" height="5.8" fill="#f4f4f4"/><rect x="7.2" y="0" width="6.8" height="6.6" fill="#f4f4f4"/><rect x="0" y="7.4" width="6.3" height="5.8" fill="#f4f4f4"/><rect x="7.2" y="7.4" width="6.8" height="6.6" fill="#f4f4f4"/></svg><svg class="a" style="left:52px;top:696px" width="16" height="15"><path d="M1 1 H10 M1 14 H10" stroke="#eee" stroke-width="1"/><rect x="1.5" y="3.5" width="9" height="8" fill="none" stroke="#eee" stroke-width="1.1"/><path d="M13.5 1 V14" stroke="#eee" stroke-width="1"/><rect x="12.5" y="5" width="2" height="2" fill="#eee"/></svg><svg class="a" style="left:93px;top:694px" width="19" height="19"><path d="M6 4 V2 Q6 1 7 1 H12 Q13 1 13 2 V4" fill="none" stroke="#3a8ad8" stroke-width="1.2"/><rect x="1" y="4" width="17" height="14" rx="2" fill="#f2f2f2"/><rect x="6" y="7.5" width="3" height="3" fill="#f35325"/><rect x="10" y="7.5" width="3" height="3" fill="#81bc06"/><rect x="6" y="11.5" width="3" height="3" fill="#05a6f0"/><rect x="10" y="11.5" width="3" height="3" fill="#ffba08"/></svg><svg class="a" style="left:134px;top:694px" width="20" height="20"><defs><linearGradient id="eg" x1="0" y1="0" x2="1" y2="1"><stop offset="0" stop-color="#3bd16f"/><stop offset="0.5" stop-color="#1c9ad6"/><stop offset="1" stop-color="#0c59a4"/></linearGradient></defs><circle cx="10" cy="10" r="9.5" fill="url(#eg)"/><path d="M5 11 Q6 6 11 6.5 Q15 7 15 10.5 H8 Q8.5 14 12 14.5 Q15 14.8 17 13 Q15 18 10 18 Q5 17 5 11Z" fill="#233741" opacity="0.55"/></svg><svg class="a" style="left:175px;top:695px" width="20" height="18"><path d="M10 0.5 L19.5 7 V17 H0.5 V7Z" fill="#1a6fc9"/><rect x="0.5" y="7" width="19" height="10" fill="#3ba0f0"/><path d="M0.5 7 L10 12.5 L19.5 7" fill="#8fd0ff"/></svg><svg class="a" style="left:217px;top:695px" width="20" height="17"><path d="M0.5 1.5 H7 L9 3.5 H19.5 V15.5 H0.5Z" fill="#f0c14a"/><rect x="0.5" y="5" width="19" height="10.5" fill="#fbd86a"/><rect x="5" y="10" width="10" height="5" fill="#3a8ad8"/></svg><svg class="a" style="left:258px;top:694px" width="21" height="21"><circle cx="10" cy="10" r="9" fill="#db4437"/><path d="M10 10 L1.5 6 A9 9 0 0 0 7 19Z" fill="#0f9d58"/><path d="M10 10 L7 19 A9 9 0 0 0 19 10Z" fill="#f4b400"/><circle cx="10" cy="10" r="4" fill="#fff"/><circle cx="10" cy="10" r="3" fill="#4285f4"/><circle cx="14" cy="14" r="5" fill="#c9a07a"/><circle cx="14" cy="15" r="2.5" fill="#4a2a1a"/></svg><svg class="a" style="left:299px;top:694px" width="20" height="20"><rect x="1" y="1" width="18" height="5.5" fill="#b03060"/><rect x="1" y="7" width="18" height="5.5" fill="#5a3ab0"/><rect x="1" y="13" width="18" height="5.5" fill="#2a9040"/><rect x="8" y="1" width="4" height="18" fill="#e0a050"/><rect x="7" y="8" width="6" height="4" fill="none" stroke="#fff" stroke-width="0.8"/></svg><svg class="a" style="left:341px;top:695px" width="20" height="18"><rect x="5" y="1" width="14" height="16" rx="1" fill="#2b7cd3"/><rect x="5" y="6" width="14" height="5" fill="#185abd"/><rect x="5" y="11" width="14" height="6" fill="#103f91"/><rect x="1" y="4" width="10" height="10" rx="1" fill="#185abd"/><text x="2.3" y="12" font-size="7.5" font-weight="bold" fill="#fff" font-family="Liberation Sans">W</text></svg><div class="a" style="left:372px;top:687px;width:37px;height:33px;background:#3a464e"></div><svg class="a" style="left:381px;top:694px" width="19" height="19"><rect x="0.5" y="0.5" width="18" height="18" rx="5" fill="#4a8cf0"/><rect x="4" y="6" width="7.5" height="7" rx="1" fill="#fff"/><path d="M11.5 8.5 L15 6.5 V12.5 L11.5 10.5Z" fill="#fff"/></svg><div class="a" style="left:409px;top:687px;width:1px;height:33px;background:#4a555c"></div><svg class="a" style="left:424px;top:694px" width="20" height="20"><rect x="0.5" y="0.5" width="19" height="19" fill="#1a8ad8"/><path d="M0.5 19.5 L7 10 L13 16 L16 13 L19.5 16 V19.5Z" fill="#0a3a8a"/><circle cx="14.5" cy="5" r="2" fill="#cfe8ff"/></svg><div class="a" style="left:210px;top:718px;width:34px;height:2px;background:#86b8e8"></div><div class="a" style="left:251px;top:718px;width:34px;height:2px;background:#86b8e8"></div><div class="a" style="left:293px;top:718px;width:34px;height:2px;background:#86b8e8"></div><div class="a" style="left:334px;top:718px;width:34px;height:2px;background:#86b8e8"></div><div class="a" style="left:372px;top:718px;width:37px;height:2px;background:#86b8e8"></div><div class="a" style="left:417px;top:718px;width:34px;height:2px;background:#86b8e8"></div><svg class="a" style="left:896px;top:694px" width="22" height="18"><circle cx="8" cy="7" r="4" fill="#f8c030"/><path d="M4 16 Q2 16 2 13.5 Q2 11 5 11 Q6 7.5 10 7.5 Q14 7.5 15 11 Q19 11 19 13.5 Q19 16 16 16Z" fill="#dde6f0"/></svg><div class="t" style="left:922px;top:697.2px;font-size:11.7px;color:#eaeaea;">9°C&nbsp; Пер. облачность</div><svg class="a" style="left:1054px;top:700px" width="10" height="6"><path d="M0.5 5.5 L5 1 L9.5 5.5" stroke="#eee" stroke-width="1.1" fill="none"/></svg><svg class="a" style="left:1073px;top:697px" width="10" height="13"><rect x="1.5" y="3" width="6" height="7" rx="1" fill="none" stroke="#ddd"/><path d="M2 1 H7 M2 12 H7 M8.5 5 V8" stroke="#ddd"/></svg><svg class="a" style="left:1093px;top:696px" width="8" height="15"><rect x="1.5" y="0.5" width="5" height="9" rx="2.5" fill="#e8e8e8"/><path d="M4 10 V13 M1.5 13.5 H6.5" stroke="#e8e8e8"/></svg><svg class="a" style="left:1111px;top:697px" width="14" height="12"><path d="M0.5 4 H3 L6.5 1 V11 L3 8 H0.5Z" fill="none" stroke="#ddd"/><path d="M8.5 4 Q10 6 8.5 8 M10.5 2.5 Q13 6 10.5 9.5" fill="none" stroke="#ddd"/></svg><svg class="a" style="left:1131px;top:699px" width="15" height="9"><rect x="0.5" y="1.5" width="12" height="6" fill="none" stroke="#ddd"/><rect x="2" y="3" width="9" height="3" fill="#ddd"/><rect x="13" y="3.5" width="1.5" height="2" fill="#ddd"/><path d="M1 0.5 H4" stroke="#ddd"/></svg><div class="t" style="left:1155px;top:698.5px;font-size:9.5px;color:#eaeaea;">ҚАЗ</div><div class="t" style="left:1206.6px;top:691.1px;font-size:9.5px;color:#eaeaea;transform:translateX(-50%);">20:11</div><div class="t" style="left:1206.6px;top:706.1px;font-size:9.5px;color:#eaeaea;transform:translateX(-50%);">22.11.2021</div><svg class="a" style="left:1244px;top:696px" width="17" height="15"><path d="M1 0.5 H15.5 V10 H6 L2.5 13.5 V10 H1Z" fill="#f2f2f2"/><path d="M3.5 3 H13 M3.5 5.3 H13 M3.5 7.6 H10.5" stroke="#1c2a48" stroke-width="0.9"/></svg><div class="a" style="left:1252.5px;top:703px;width:13px;height:13px;border-radius:50%;background:#2a2a2a;border:1px solid #888"></div><div class="t" style="left:1259px;top:704.6px;font-size:8.5px;color:#fff;transform:translateX(-50%);">1</div>
</body></html>
